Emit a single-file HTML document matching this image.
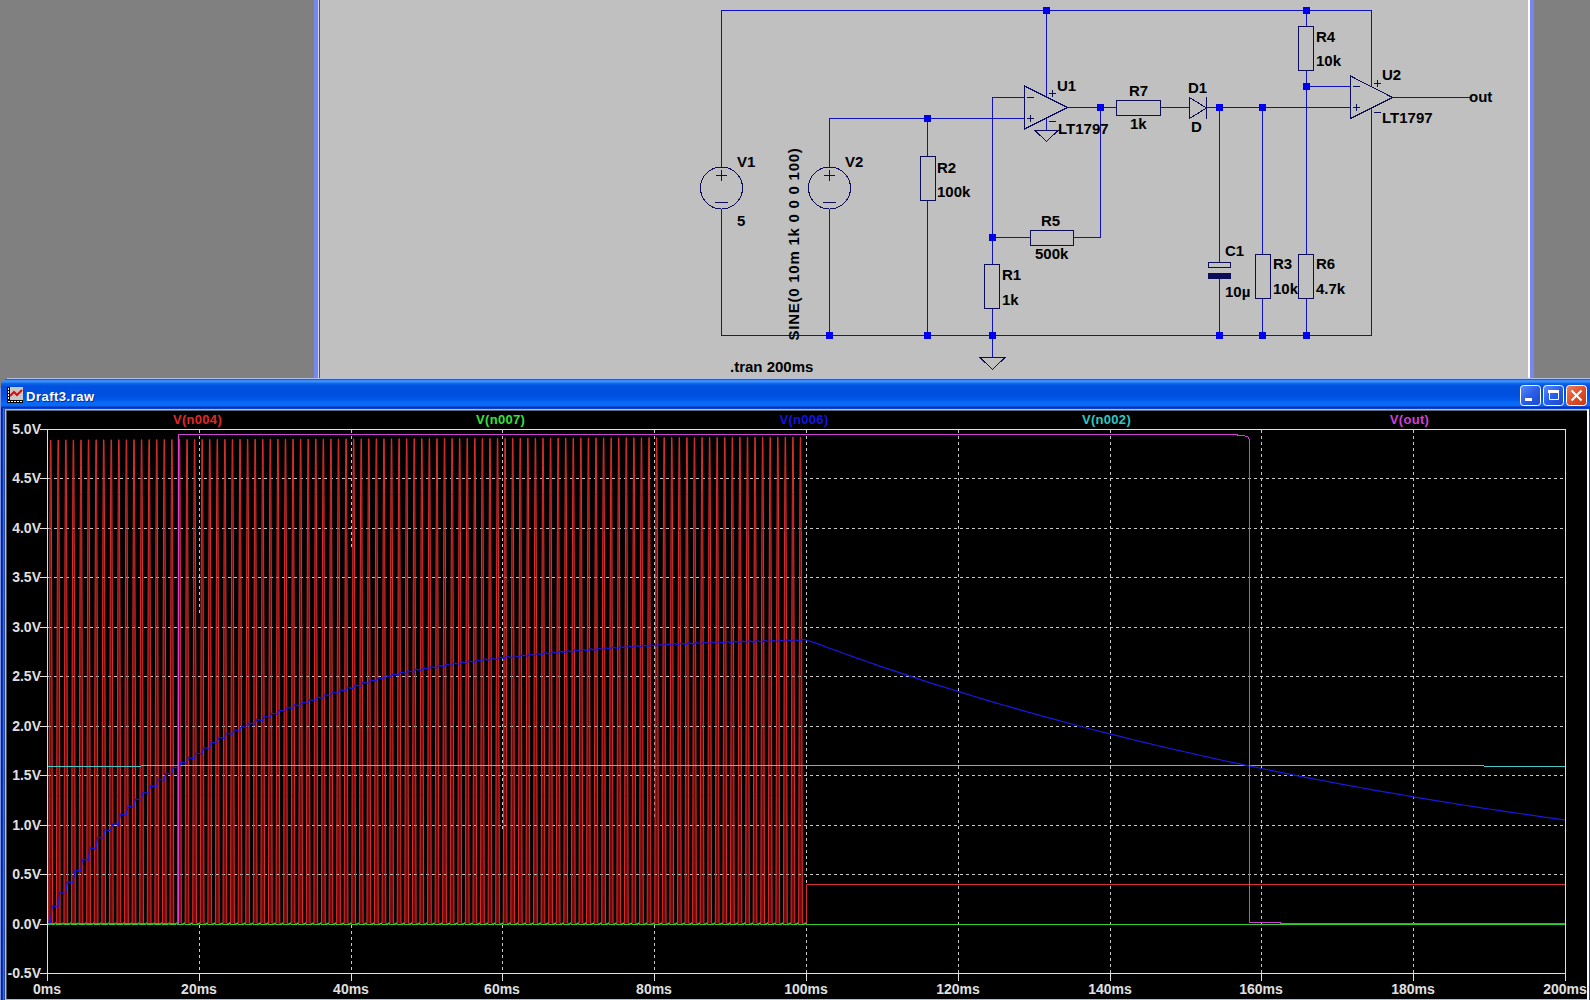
<!DOCTYPE html>
<html><head><meta charset="utf-8"><style>
html,body{margin:0;padding:0;background:#808080;width:1590px;height:1000px;overflow:hidden}
svg{display:block}
</style></head><body>
<svg width="1590" height="1000" viewBox="0 0 1590 1000" shape-rendering="crispEdges">
<defs>
<linearGradient id="bb" x1="0" y1="0" x2="1" y2="1"><stop offset="0" stop-color="#5a8cf8"/><stop offset="0.5" stop-color="#2a5ee8"/><stop offset="1" stop-color="#1a48c8"/></linearGradient>
<linearGradient id="cb" x1="0" y1="0" x2="1" y2="1"><stop offset="0" stop-color="#f08060"/><stop offset="0.5" stop-color="#e05028"/><stop offset="1" stop-color="#c83810"/></linearGradient>
<linearGradient id="tb" x1="0" y1="0" x2="0" y2="1">
<stop offset="0" stop-color="#0a3aa8"/><stop offset="0.04" stop-color="#3a8cf8"/><stop offset="0.1" stop-color="#3a8cf8"/>
<stop offset="0.16" stop-color="#0a64e8"/><stop offset="0.25" stop-color="#0050e0"/><stop offset="0.55" stop-color="#0050e0"/>
<stop offset="0.7" stop-color="#0058e8"/><stop offset="0.8" stop-color="#0868f8"/><stop offset="0.93" stop-color="#0868f8"/><stop offset="0.97" stop-color="#0a30a0"/><stop offset="1" stop-color="#0a30a0"/>
</linearGradient>
</defs>
<rect x="0" y="0" width="1590" height="1000" fill="#808080"/>
<!-- schematic window -->
<rect x="314" y="0" width="4" height="380" fill="#7688ee"/>
<rect x="318" y="0" width="1" height="380" fill="#d0d4f0"/>
<rect x="319" y="0" width="1" height="380" fill="#505050"/>
<rect x="320" y="0" width="1208" height="380" fill="#c0c0c0"/>
<rect x="1528" y="0" width="2" height="380" fill="#ffffff"/>
<rect x="1530" y="0" width="4" height="380" fill="#7688ee"/>
<path d="M721 10.5H1372M721 335.5H1372M829 118.5H1025M992 97.5H1025M992 237.5H1031M1074 237.5H1101M1067 107.5H1117M1160 107.5H1190M1206 107.5H1351M1306 86.5H1351M1392 97.5H1470M721.5 10V168M721.5 209V336M1371.5 10V87M1371.5 108V336M1046.5 10V97M1046.5 118V131M829.5 118V168M829.5 209V336M927.5 118V157M927.5 200V336M992.5 97V265M992.5 308V358M1100.5 107V238M1219.5 107V263M1219.5 279V336M1262.5 107V255M1262.5 298V336M1306.5 10V27M1306.5 70V255M1306.5 298V336" stroke="#1010c0" fill="none"/><rect x="1043" y="7" width="7" height="7" fill="#0000ee"/><rect x="1303" y="7" width="7" height="7" fill="#0000ee"/><rect x="924" y="115" width="7" height="7" fill="#0000ee"/><rect x="1097" y="104" width="7" height="7" fill="#0000ee"/><rect x="1216" y="104" width="7" height="7" fill="#0000ee"/><rect x="1259" y="104" width="7" height="7" fill="#0000ee"/><rect x="1303" y="83" width="7" height="7" fill="#0000ee"/><rect x="989" y="234" width="7" height="7" fill="#0000ee"/><rect x="826" y="332" width="7" height="7" fill="#0000ee"/><rect x="924" y="332" width="7" height="7" fill="#0000ee"/><rect x="989" y="332" width="7" height="7" fill="#0000ee"/><rect x="1216" y="332" width="7" height="7" fill="#0000ee"/><rect x="1259" y="332" width="7" height="7" fill="#0000ee"/><rect x="1303" y="332" width="7" height="7" fill="#0000ee"/><path d="M920.5 156.5H935.5V200.5H920.5Z M984.5 264.5H999.5V308.5H984.5Z M1030.5 230.5H1073.5V245.5H1030.5Z M1116.5 100.5H1160.5V115.5H1116.5Z M1298.5 26.5H1313.5V70.5H1298.5Z M1255.5 254.5H1270.5V298.5H1255.5Z M1298.5 254.5H1313.5V298.5H1298.5Z M1208.5 262.5H1230.5V267.5H1208.5Z M1189.5 97.5V118.5L1206.5 108Z M1206.5 97V119 M1024.5 86L1024.5 129L1067.5 107.5Z M1350.5 76L1350.5 118.5L1392.5 97.5Z M1027 97.5H1034 M1353 86.5H1360 M1027 118.5H1034M1030.5 115V122 M1353 107.5H1360M1356.5 104V111 M1049 93.5H1056M1052.5 90V97 M1374 83.5H1381M1377.5 80V87 M1049 121.5H1056 M1374 112.5H1381 M1035 130.5H1058L1046.5 141.5Z M980 357.5H1005L992.5 369.5Z M716 175.5H727M721.5 170V181M715 202.5H728 M824 175.5H835M829.5 170V181M823 202.5H836" stroke="#0c0c58" fill="none"/><circle cx="721.5" cy="188" r="21" stroke="#0c0c58" fill="none"/><circle cx="829.5" cy="188" r="21" stroke="#0c0c58" fill="none"/><rect x="1208" y="273" width="23" height="6" fill="#0c0c58"/><g font-family="Liberation Sans, sans-serif" font-size="15" font-weight="bold" fill="#000"><text x="737" y="166.8">V1</text><text x="737" y="225.6">5</text><text x="845" y="166.8">V2</text><text x="937" y="172.7">R2</text><text x="937" y="196.7">100k</text><text x="1057" y="91.0">U1</text><text x="1058" y="134.1">LT1797</text><text x="1002" y="280.1">R1</text><text x="1002" y="305.3">1k</text><text x="1041" y="226.1">R5</text><text x="1035" y="259.1">500k</text><text x="1129" y="95.8">R7</text><text x="1130" y="128.8">1k</text><text x="1188" y="92.8">D1</text><text x="1191" y="132.0">D</text><text x="1225" y="256.1">C1</text><text x="1225" y="297.0">10µ</text><text x="1273" y="268.7">R3</text><text x="1273" y="293.8">10k</text><text x="1316" y="268.7">R6</text><text x="1316" y="293.8">4.7k</text><text x="1316" y="41.9">R4</text><text x="1316" y="66.0">10k</text><text x="1382" y="80.1">U2</text><text x="1382" y="123.2">LT1797</text><text x="1469" y="101.7">out</text><text x="730" y="371.9">.tran 200ms</text><text transform="translate(798.5 340.5) rotate(-90)" font-weight="bold" letter-spacing="0.75">SINE(0 10m 1k 0 0 0 100)</text></g>
<!-- plot window -->
<path d="M1 1000V386Q1 379 8 379H1590V1000Z" fill="#0840d8"/>
<path d="M1 408V386Q1 379 8 379H1590V408Z" fill="url(#tb)"/>
<rect x="7" y="378" width="1583" height="1" fill="#b4c0ec"/>
<rect x="0" y="388" width="1" height="612" fill="#8090e0"/>
<rect x="1" y="408" width="1" height="592" fill="#0a2288"/>
<rect x="2" y="408" width="1" height="592" fill="#0436b8"/>
<rect x="3" y="408" width="1" height="592" fill="#3366e8"/>
<rect x="4" y="408" width="1" height="592" fill="#2a48a8"/>
<rect x="5" y="409" width="1585" height="591" fill="#b0bce8"/>
<rect x="6" y="410" width="1581" height="1" fill="#606878"/>
<rect x="6" y="411" width="1" height="588" fill="#505860"/>
<rect x="7" y="411" width="1580" height="588" fill="#000"/>
<rect x="1587" y="409" width="2" height="591" fill="#ffffff"/>
<rect x="1589" y="409" width="1" height="591" fill="#1040c8"/>
<path d="M48.80 923.5L48.96 858.8L49.12 795.3L49.27 733.9L49.43 675.8L49.59 621.9L49.75 573.1L49.90 530.4L50.06 494.4L50.22 465.7L50.38 444.9L50.54 440.0L50.69 440.0L50.85 440.0L51.01 444.9L51.17 465.7L51.32 494.4L51.48 530.4L51.64 573.1L51.80 621.9L51.96 675.8L52.11 733.9L52.27 795.3L52.43 858.8L52.59 923.5ZM56.37 923.5L56.53 858.8L56.69 795.3L56.85 733.9L57.01 675.8L57.16 621.9L57.32 573.1L57.48 530.4L57.64 494.4L57.79 465.7L57.95 444.9L58.11 440.0L58.27 440.0L58.43 440.0L58.58 444.9L58.74 465.7L58.90 494.4L59.06 530.4L59.21 573.1L59.37 621.9L59.53 675.8L59.69 733.9L59.85 795.3L60.00 858.8L60.16 923.5ZM63.95 923.5L64.11 858.8L64.26 795.3L64.42 733.9L64.58 675.8L64.74 621.9L64.89 573.1L65.05 530.4L65.21 494.4L65.37 465.7L65.53 444.9L65.68 439.9L65.84 439.9L66.00 439.9L66.16 444.9L66.31 465.7L66.47 494.4L66.63 530.4L66.79 573.1L66.95 621.9L67.10 675.8L67.26 733.9L67.42 795.3L67.58 858.8L67.73 923.5ZM71.52 923.5L71.68 858.8L71.84 795.3L72.00 733.9L72.15 675.8L72.31 621.9L72.47 573.1L72.63 530.4L72.78 494.4L72.94 465.7L73.10 444.9L73.26 439.9L73.42 439.9L73.57 439.9L73.73 444.9L73.89 465.7L74.05 494.4L74.20 530.4L74.36 573.1L74.52 621.9L74.68 675.8L74.84 733.9L74.99 795.3L75.15 858.8L75.31 923.5ZM79.10 923.5L79.25 858.8L79.41 795.3L79.57 733.9L79.73 675.8L79.88 621.9L80.04 573.1L80.20 530.4L80.36 494.4L80.52 465.7L80.67 444.9L80.83 439.9L80.99 439.9L81.15 439.9L81.31 444.9L81.46 465.7L81.62 494.4L81.78 530.4L81.94 573.1L82.09 621.9L82.25 675.8L82.41 733.9L82.57 795.3L82.73 858.8L82.88 923.5ZM86.67 923.5L86.83 858.8L86.99 795.3L87.14 733.9L87.30 675.8L87.46 621.9L87.62 573.1L87.77 530.4L87.93 494.4L88.09 465.7L88.25 444.9L88.41 439.8L88.56 439.8L88.72 439.8L88.88 444.9L89.04 465.7L89.19 494.4L89.35 530.4L89.51 573.1L89.67 621.9L89.83 675.8L89.98 733.9L90.14 795.3L90.30 858.8L90.46 923.5ZM94.24 923.5L94.40 858.8L94.56 795.3L94.72 733.9L94.88 675.8L95.03 621.9L95.19 573.1L95.35 530.4L95.51 494.4L95.66 465.7L95.82 444.9L95.98 439.8L96.14 439.8L96.30 439.8L96.45 444.9L96.61 465.7L96.77 494.4L96.93 530.4L97.08 573.1L97.24 621.9L97.40 675.8L97.56 733.9L97.72 795.3L97.87 858.8L98.03 923.5ZM101.82 923.5L101.98 858.8L102.13 795.3L102.29 733.9L102.45 675.8L102.61 621.9L102.76 573.1L102.92 530.4L103.08 494.4L103.24 465.7L103.40 444.9L103.55 439.8L103.71 439.8L103.87 439.8L104.03 444.9L104.18 465.7L104.34 494.4L104.50 530.4L104.66 573.1L104.82 621.9L104.97 675.8L105.13 733.9L105.29 795.3L105.45 858.8L105.61 923.5ZM109.39 923.5L109.55 858.8L109.71 795.3L109.87 733.9L110.02 675.8L110.18 621.9L110.34 573.1L110.50 530.4L110.65 494.4L110.81 465.7L110.97 444.9L111.13 439.8L111.29 439.8L111.44 439.8L111.60 444.9L111.76 465.7L111.92 494.4L112.07 530.4L112.23 573.1L112.39 621.9L112.55 675.8L112.71 733.9L112.86 795.3L113.02 858.8L113.18 923.5ZM116.97 923.5L117.12 858.8L117.28 795.3L117.44 733.9L117.60 675.8L117.75 621.9L117.91 573.1L118.07 530.4L118.23 494.4L118.39 465.7L118.54 444.9L118.70 439.7L118.86 439.7L119.02 439.7L119.18 444.9L119.33 465.7L119.49 494.4L119.65 530.4L119.81 573.1L119.96 621.9L120.12 675.8L120.28 733.9L120.44 795.3L120.60 858.8L120.75 923.5ZM124.54 923.5L124.70 858.8L124.86 795.3L125.01 733.9L125.17 675.8L125.33 621.9L125.49 573.1L125.64 530.4L125.80 494.4L125.96 465.7L126.12 444.9L126.28 439.7L126.43 439.7L126.59 439.7L126.75 444.9L126.91 465.7L127.06 494.4L127.22 530.4L127.38 573.1L127.54 621.9L127.70 675.8L127.85 733.9L128.01 795.3L128.17 858.8L128.33 923.5ZM132.11 923.5L132.27 858.8L132.43 795.3L132.59 733.9L132.75 675.8L132.90 621.9L133.06 573.1L133.22 530.4L133.38 494.4L133.53 465.7L133.69 444.9L133.85 439.7L134.01 439.7L134.17 439.7L134.32 444.9L134.48 465.7L134.64 494.4L134.80 530.4L134.95 573.1L135.11 621.9L135.27 675.8L135.43 733.9L135.59 795.3L135.74 858.8L135.90 923.5ZM139.69 923.5L139.85 858.8L140.00 795.3L140.16 733.9L140.32 675.8L140.48 621.9L140.63 573.1L140.79 530.4L140.95 494.4L141.11 465.7L141.27 444.9L141.42 439.6L141.58 439.6L141.74 439.6L141.90 444.9L142.05 465.7L142.21 494.4L142.37 530.4L142.53 573.1L142.69 621.9L142.84 675.8L143.00 733.9L143.16 795.3L143.32 858.8L143.47 923.5ZM147.26 923.5L147.42 858.8L147.58 795.3L147.74 733.9L147.89 675.8L148.05 621.9L148.21 573.1L148.37 530.4L148.52 494.4L148.68 465.7L148.84 444.9L149.00 439.6L149.16 439.6L149.31 439.6L149.47 444.9L149.63 465.7L149.79 494.4L149.94 530.4L150.10 573.1L150.26 621.9L150.42 675.8L150.58 733.9L150.73 795.3L150.89 858.8L151.05 923.5ZM154.84 923.5L154.99 858.8L155.15 795.3L155.31 733.9L155.47 675.8L155.62 621.9L155.78 573.1L155.94 530.4L156.10 494.4L156.26 465.7L156.41 444.9L156.57 439.6L156.73 439.6L156.89 439.6L157.05 444.9L157.20 465.7L157.36 494.4L157.52 530.4L157.68 573.1L157.83 621.9L157.99 675.8L158.15 733.9L158.31 795.3L158.47 858.8L158.62 923.5ZM162.41 923.5L162.57 858.8L162.73 795.3L162.88 733.9L163.04 675.8L163.20 621.9L163.36 573.1L163.51 530.4L163.67 494.4L163.83 465.7L163.99 444.9L164.15 439.5L164.30 439.5L164.46 439.5L164.62 444.9L164.78 465.7L164.93 494.4L165.09 530.4L165.25 573.1L165.41 621.9L165.57 675.8L165.72 733.9L165.88 795.3L166.04 858.8L166.20 923.5ZM169.98 923.5L170.14 858.8L170.30 795.3L170.46 733.9L170.62 675.8L170.77 621.9L170.93 573.1L171.09 530.4L171.25 494.4L171.40 465.7L171.56 444.9L171.72 439.5L171.88 439.5L172.04 439.5L172.19 444.9L172.35 465.7L172.51 494.4L172.67 530.4L172.82 573.1L172.98 621.9L173.14 675.8L173.30 733.9L173.46 795.3L173.61 858.8L173.77 923.5ZM177.56 923.5L177.72 858.8L177.87 795.3L178.03 733.9L178.19 675.8L178.35 621.9L178.50 573.1L178.66 530.4L178.82 494.4L178.98 465.7L179.14 444.9L179.29 439.5L179.45 439.5L179.61 439.5L179.77 444.9L179.92 465.7L180.08 494.4L180.24 530.4L180.40 573.1L180.56 621.9L180.71 675.8L180.87 733.9L181.03 795.3L181.19 858.8L181.34 923.5ZM185.13 923.5L185.29 858.8L185.45 795.3L185.61 733.9L185.76 675.8L185.92 621.9L186.08 573.1L186.24 530.4L186.39 494.4L186.55 465.7L186.71 444.9L186.87 439.5L187.03 439.5L187.18 439.5L187.34 444.9L187.50 465.7L187.66 494.4L187.81 530.4L187.97 573.1L188.13 621.9L188.29 675.8L188.45 733.9L188.60 795.3L188.76 858.8L188.92 923.5ZM192.71 923.5L192.86 858.8L193.02 795.3L193.18 733.9L193.34 675.8L193.49 621.9L193.65 573.1L193.81 530.4L193.97 494.4L194.13 465.7L194.28 444.9L194.44 439.4L194.60 439.4L194.76 439.4L194.92 444.9L195.07 465.7L195.23 494.4L195.39 530.4L195.55 573.1L195.70 621.9L195.86 675.8L196.02 733.9L196.18 795.3L196.34 858.8L196.49 923.5ZM200.28 923.5L200.44 858.8L200.60 795.3L200.75 733.9L200.91 675.8L201.07 621.9L201.23 573.1L201.38 530.4L201.54 494.4L201.70 465.7L201.86 444.9L202.02 439.4L202.17 439.4L202.33 439.4L202.49 444.9L202.65 465.7L202.80 494.4L202.96 530.4L203.12 573.1L203.28 621.9L203.44 675.8L203.59 733.9L203.75 795.3L203.91 858.8L204.07 923.5ZM207.85 923.5L208.01 858.8L208.17 795.3L208.33 733.9L208.49 675.8L208.64 621.9L208.80 573.1L208.96 530.4L209.12 494.4L209.27 465.7L209.43 444.9L209.59 439.4L209.75 439.4L209.91 439.4L210.06 444.9L210.22 465.7L210.38 494.4L210.54 530.4L210.69 573.1L210.85 621.9L211.01 675.8L211.17 733.9L211.33 795.3L211.48 858.8L211.64 923.5ZM215.43 923.5L215.59 858.8L215.74 795.3L215.90 733.9L216.06 675.8L216.22 621.9L216.37 573.1L216.53 530.4L216.69 494.4L216.85 465.7L217.01 444.9L217.16 439.3L217.32 439.3L217.48 439.3L217.64 444.9L217.79 465.7L217.95 494.4L218.11 530.4L218.27 573.1L218.43 621.9L218.58 675.8L218.74 733.9L218.90 795.3L219.06 858.8L219.22 923.5ZM223.00 923.5L223.16 858.8L223.32 795.3L223.48 733.9L223.63 675.8L223.79 621.9L223.95 573.1L224.11 530.4L224.26 494.4L224.42 465.7L224.58 444.9L224.74 439.3L224.90 439.3L225.05 439.3L225.21 444.9L225.37 465.7L225.53 494.4L225.68 530.4L225.84 573.1L226.00 621.9L226.16 675.8L226.32 733.9L226.47 795.3L226.63 858.8L226.79 923.5ZM230.58 923.5L230.73 858.8L230.89 795.3L231.05 733.9L231.21 675.8L231.36 621.9L231.52 573.1L231.68 530.4L231.84 494.4L232.00 465.7L232.15 444.9L232.31 439.3L232.47 439.3L232.63 439.3L232.79 444.9L232.94 465.7L233.10 494.4L233.26 530.4L233.42 573.1L233.57 621.9L233.73 675.8L233.89 733.9L234.05 795.3L234.21 858.8L234.36 923.5ZM238.15 923.5L238.31 858.8L238.47 795.3L238.62 733.9L238.78 675.8L238.94 621.9L239.10 573.1L239.25 530.4L239.41 494.4L239.57 465.7L239.73 444.9L239.89 439.2L240.04 439.2L240.20 439.2L240.36 444.9L240.52 465.7L240.67 494.4L240.83 530.4L240.99 573.1L241.15 621.9L241.31 675.8L241.46 733.9L241.62 795.3L241.78 858.8L241.94 923.5ZM245.72 923.5L245.88 858.8L246.04 795.3L246.20 733.9L246.36 675.8L246.51 621.9L246.67 573.1L246.83 530.4L246.99 494.4L247.14 465.7L247.30 444.9L247.46 439.2L247.62 439.2L247.78 439.2L247.93 444.9L248.09 465.7L248.25 494.4L248.41 530.4L248.56 573.1L248.72 621.9L248.88 675.8L249.04 733.9L249.20 795.3L249.35 858.8L249.51 923.5ZM253.30 923.5L253.46 858.8L253.61 795.3L253.77 733.9L253.93 675.8L254.09 621.9L254.24 573.1L254.40 530.4L254.56 494.4L254.72 465.7L254.88 444.9L255.03 439.2L255.19 439.2L255.35 439.2L255.51 444.9L255.66 465.7L255.82 494.4L255.98 530.4L256.14 573.1L256.30 621.9L256.45 675.8L256.61 733.9L256.77 795.3L256.93 858.8L257.08 923.5ZM260.87 923.5L261.03 858.8L261.19 795.3L261.35 733.9L261.50 675.8L261.66 621.9L261.82 573.1L261.98 530.4L262.13 494.4L262.29 465.7L262.45 444.9L262.61 439.2L262.77 439.2L262.92 439.2L263.08 444.9L263.24 465.7L263.40 494.4L263.55 530.4L263.71 573.1L263.87 621.9L264.03 675.8L264.19 733.9L264.34 795.3L264.50 858.8L264.66 923.5ZM268.45 923.5L268.60 858.8L268.76 795.3L268.92 733.9L269.08 675.8L269.23 621.9L269.39 573.1L269.55 530.4L269.71 494.4L269.87 465.7L270.02 444.9L270.18 439.1L270.34 439.1L270.50 439.1L270.66 444.9L270.81 465.7L270.97 494.4L271.13 530.4L271.29 573.1L271.44 621.9L271.60 675.8L271.76 733.9L271.92 795.3L272.08 858.8L272.23 923.5ZM276.02 923.5L276.18 858.8L276.34 795.3L276.49 733.9L276.65 675.8L276.81 621.9L276.97 573.1L277.12 530.4L277.28 494.4L277.44 465.7L277.60 444.9L277.76 439.1L277.91 439.1L278.07 439.1L278.23 444.9L278.39 465.7L278.54 494.4L278.70 530.4L278.86 573.1L279.02 621.9L279.18 675.8L279.33 733.9L279.49 795.3L279.65 858.8L279.81 923.5ZM283.59 923.5L283.75 858.8L283.91 795.3L284.07 733.9L284.23 675.8L284.38 621.9L284.54 573.1L284.70 530.4L284.86 494.4L285.01 465.7L285.17 444.9L285.33 439.1L285.49 439.1L285.65 439.1L285.80 444.9L285.96 465.7L286.12 494.4L286.28 530.4L286.43 573.1L286.59 621.9L286.75 675.8L286.91 733.9L287.07 795.3L287.22 858.8L287.38 923.5ZM291.17 923.5L291.33 858.8L291.48 795.3L291.64 733.9L291.80 675.8L291.96 621.9L292.11 573.1L292.27 530.4L292.43 494.4L292.59 465.7L292.75 444.9L292.90 439.0L293.06 439.0L293.22 439.0L293.38 444.9L293.53 465.7L293.69 494.4L293.85 530.4L294.01 573.1L294.17 621.9L294.32 675.8L294.48 733.9L294.64 795.3L294.80 858.8L294.95 923.5ZM298.74 923.5L298.90 858.8L299.06 795.3L299.22 733.9L299.37 675.8L299.53 621.9L299.69 573.1L299.85 530.4L300.00 494.4L300.16 465.7L300.32 444.9L300.48 439.0L300.64 439.0L300.79 439.0L300.95 444.9L301.11 465.7L301.27 494.4L301.42 530.4L301.58 573.1L301.74 621.9L301.90 675.8L302.06 733.9L302.21 795.3L302.37 858.8L302.53 923.5ZM306.32 923.5L306.47 858.8L306.63 795.3L306.79 733.9L306.95 675.8L307.10 621.9L307.26 573.1L307.42 530.4L307.58 494.4L307.74 465.7L307.89 444.9L308.05 439.0L308.21 439.0L308.37 439.0L308.53 444.9L308.68 465.7L308.84 494.4L309.00 530.4L309.16 573.1L309.31 621.9L309.47 675.8L309.63 733.9L309.79 795.3L309.95 858.8L310.10 923.5ZM313.89 923.5L314.05 858.8L314.21 795.3L314.36 733.9L314.52 675.8L314.68 621.9L314.84 573.1L314.99 530.4L315.15 494.4L315.31 465.7L315.47 444.9L315.63 438.9L315.78 438.9L315.94 438.9L316.10 444.9L316.26 465.7L316.41 494.4L316.57 530.4L316.73 573.1L316.89 621.9L317.05 675.8L317.20 733.9L317.36 795.3L317.52 858.8L317.68 923.5ZM321.46 923.5L321.62 858.8L321.78 795.3L321.94 733.9L322.10 675.8L322.25 621.9L322.41 573.1L322.57 530.4L322.73 494.4L322.88 465.7L323.04 444.9L323.20 438.9L323.36 438.9L323.52 438.9L323.67 444.9L323.83 465.7L323.99 494.4L324.15 530.4L324.30 573.1L324.46 621.9L324.62 675.8L324.78 733.9L324.94 795.3L325.09 858.8L325.25 923.5ZM329.04 923.5L329.20 858.8L329.35 795.3L329.51 733.9L329.67 675.8L329.83 621.9L329.98 573.1L330.14 530.4L330.30 494.4L330.46 465.7L330.62 444.9L330.77 438.9L330.93 438.9L331.09 438.9L331.25 444.9L331.40 465.7L331.56 494.4L331.72 530.4L331.88 573.1L332.04 621.9L332.19 675.8L332.35 733.9L332.51 795.3L332.67 858.8L332.82 923.5ZM336.61 923.5L336.77 858.8L336.93 795.3L337.09 733.9L337.24 675.8L337.40 621.9L337.56 573.1L337.72 530.4L337.87 494.4L338.03 465.7L338.19 444.9L338.35 438.9L338.51 438.9L338.66 438.9L338.82 444.9L338.98 465.7L339.14 494.4L339.29 530.4L339.45 573.1L339.61 621.9L339.77 675.8L339.93 733.9L340.08 795.3L340.24 858.8L340.40 923.5ZM344.19 923.5L344.34 858.8L344.50 795.3L344.66 733.9L344.82 675.8L344.97 621.9L345.13 573.1L345.29 530.4L345.45 494.4L345.61 465.7L345.76 444.9L345.92 438.8L346.08 438.8L346.24 438.8L346.40 444.9L346.55 465.7L346.71 494.4L346.87 530.4L347.03 573.1L347.18 621.9L347.34 675.8L347.50 733.9L347.66 795.3L347.82 858.8L347.97 923.5ZM351.76 923.5L351.92 858.8L352.08 795.3L352.23 733.9L352.39 675.8L352.55 621.9L352.71 573.1L352.86 530.4L353.02 494.4L353.18 465.7L353.34 444.9L353.50 438.8L353.65 438.8L353.81 438.8L353.97 444.9L354.13 465.7L354.28 494.4L354.44 530.4L354.60 573.1L354.76 621.9L354.92 675.8L355.07 733.9L355.23 795.3L355.39 858.8L355.55 923.5ZM359.33 923.5L359.49 858.8L359.65 795.3L359.81 733.9L359.97 675.8L360.12 621.9L360.28 573.1L360.44 530.4L360.60 494.4L360.75 465.7L360.91 444.9L361.07 438.8L361.23 438.8L361.39 438.8L361.54 444.9L361.70 465.7L361.86 494.4L362.02 530.4L362.17 573.1L362.33 621.9L362.49 675.8L362.65 733.9L362.81 795.3L362.96 858.8L363.12 923.5ZM366.91 923.5L367.07 858.8L367.22 795.3L367.38 733.9L367.54 675.8L367.70 621.9L367.85 573.1L368.01 530.4L368.17 494.4L368.33 465.7L368.49 444.9L368.64 438.7L368.80 438.7L368.96 438.7L369.12 444.9L369.27 465.7L369.43 494.4L369.59 530.4L369.75 573.1L369.91 621.9L370.06 675.8L370.22 733.9L370.38 795.3L370.54 858.8L370.69 923.5ZM374.48 923.5L374.64 858.8L374.80 795.3L374.96 733.9L375.11 675.8L375.27 621.9L375.43 573.1L375.59 530.4L375.74 494.4L375.90 465.7L376.06 444.9L376.22 438.7L376.38 438.7L376.53 438.7L376.69 444.9L376.85 465.7L377.01 494.4L377.16 530.4L377.32 573.1L377.48 621.9L377.64 675.8L377.80 733.9L377.95 795.3L378.11 858.8L378.27 923.5ZM382.06 923.5L382.21 858.8L382.37 795.3L382.53 733.9L382.69 675.8L382.84 621.9L383.00 573.1L383.16 530.4L383.32 494.4L383.48 465.7L383.63 444.9L383.79 438.7L383.95 438.7L384.11 438.7L384.27 444.9L384.42 465.7L384.58 494.4L384.74 530.4L384.90 573.1L385.05 621.9L385.21 675.8L385.37 733.9L385.53 795.3L385.69 858.8L385.84 923.5ZM389.63 923.5L389.79 858.8L389.95 795.3L390.10 733.9L390.26 675.8L390.42 621.9L390.58 573.1L390.73 530.4L390.89 494.4L391.05 465.7L391.21 444.9L391.37 438.6L391.52 438.6L391.68 438.6L391.84 444.9L392.00 465.7L392.15 494.4L392.31 530.4L392.47 573.1L392.63 621.9L392.79 675.8L392.94 733.9L393.10 795.3L393.26 858.8L393.42 923.5ZM397.20 923.5L397.36 858.8L397.52 795.3L397.68 733.9L397.84 675.8L397.99 621.9L398.15 573.1L398.31 530.4L398.47 494.4L398.62 465.7L398.78 444.9L398.94 438.6L399.10 438.6L399.26 438.6L399.41 444.9L399.57 465.7L399.73 494.4L399.89 530.4L400.04 573.1L400.20 621.9L400.36 675.8L400.52 733.9L400.68 795.3L400.83 858.8L400.99 923.5ZM404.78 923.5L404.94 858.8L405.09 795.3L405.25 733.9L405.41 675.8L405.57 621.9L405.72 573.1L405.88 530.4L406.04 494.4L406.20 465.7L406.36 444.9L406.51 438.6L406.67 438.6L406.83 438.6L406.99 444.9L407.14 465.7L407.30 494.4L407.46 530.4L407.62 573.1L407.78 621.9L407.93 675.8L408.09 733.9L408.25 795.3L408.41 858.8L408.56 923.5ZM412.35 923.5L412.51 858.8L412.67 795.3L412.83 733.9L412.98 675.8L413.14 621.9L413.30 573.1L413.46 530.4L413.61 494.4L413.77 465.7L413.93 444.9L414.09 438.6L414.25 438.6L414.40 438.6L414.56 444.9L414.72 465.7L414.88 494.4L415.03 530.4L415.19 573.1L415.35 621.9L415.51 675.8L415.67 733.9L415.82 795.3L415.98 858.8L416.14 923.5ZM419.93 923.5L420.08 858.8L420.24 795.3L420.40 733.9L420.56 675.8L420.71 621.9L420.87 573.1L421.03 530.4L421.19 494.4L421.35 465.7L421.50 444.9L421.66 438.5L421.82 438.5L421.98 438.5L422.14 444.9L422.29 465.7L422.45 494.4L422.61 530.4L422.77 573.1L422.92 621.9L423.08 675.8L423.24 733.9L423.40 795.3L423.56 858.8L423.71 923.5ZM427.50 923.5L427.66 858.8L427.82 795.3L427.97 733.9L428.13 675.8L428.29 621.9L428.45 573.1L428.60 530.4L428.76 494.4L428.92 465.7L429.08 444.9L429.24 438.5L429.39 438.5L429.55 438.5L429.71 444.9L429.87 465.7L430.02 494.4L430.18 530.4L430.34 573.1L430.50 621.9L430.66 675.8L430.81 733.9L430.97 795.3L431.13 858.8L431.29 923.5ZM435.07 923.5L435.23 858.8L435.39 795.3L435.55 733.9L435.71 675.8L435.86 621.9L436.02 573.1L436.18 530.4L436.34 494.4L436.49 465.7L436.65 444.9L436.81 438.5L436.97 438.5L437.13 438.5L437.28 444.9L437.44 465.7L437.60 494.4L437.76 530.4L437.91 573.1L438.07 621.9L438.23 675.8L438.39 733.9L438.55 795.3L438.70 858.8L438.86 923.5ZM442.65 923.5L442.81 858.8L442.96 795.3L443.12 733.9L443.28 675.8L443.44 621.9L443.59 573.1L443.75 530.4L443.91 494.4L444.07 465.7L444.23 444.9L444.38 438.4L444.54 438.4L444.70 438.4L444.86 444.9L445.01 465.7L445.17 494.4L445.33 530.4L445.49 573.1L445.65 621.9L445.80 675.8L445.96 733.9L446.12 795.3L446.28 858.8L446.44 923.5ZM450.22 923.5L450.38 858.8L450.54 795.3L450.70 733.9L450.85 675.8L451.01 621.9L451.17 573.1L451.33 530.4L451.48 494.4L451.64 465.7L451.80 444.9L451.96 438.4L452.12 438.4L452.27 438.4L452.43 444.9L452.59 465.7L452.75 494.4L452.90 530.4L453.06 573.1L453.22 621.9L453.38 675.8L453.54 733.9L453.69 795.3L453.85 858.8L454.01 923.5ZM457.80 923.5L457.95 858.8L458.11 795.3L458.27 733.9L458.43 675.8L458.58 621.9L458.74 573.1L458.90 530.4L459.06 494.4L459.22 465.7L459.37 444.9L459.53 438.4L459.69 438.4L459.85 438.4L460.01 444.9L460.16 465.7L460.32 494.4L460.48 530.4L460.64 573.1L460.79 621.9L460.95 675.8L461.11 733.9L461.27 795.3L461.43 858.8L461.58 923.5ZM465.37 923.5L465.53 858.8L465.69 795.3L465.84 733.9L466.00 675.8L466.16 621.9L466.32 573.1L466.47 530.4L466.63 494.4L466.79 465.7L466.95 444.9L467.11 438.3L467.26 438.3L467.42 438.3L467.58 444.9L467.74 465.7L467.89 494.4L468.05 530.4L468.21 573.1L468.37 621.9L468.53 675.8L468.68 733.9L468.84 795.3L469.00 858.8L469.16 923.5ZM472.94 923.5L473.10 858.8L473.26 795.3L473.42 733.9L473.58 675.8L473.73 621.9L473.89 573.1L474.05 530.4L474.21 494.4L474.36 465.7L474.52 444.9L474.68 438.3L474.84 438.3L475.00 438.3L475.15 444.9L475.31 465.7L475.47 494.4L475.63 530.4L475.78 573.1L475.94 621.9L476.10 675.8L476.26 733.9L476.42 795.3L476.57 858.8L476.73 923.5ZM480.52 923.5L480.68 858.8L480.83 795.3L480.99 733.9L481.15 675.8L481.31 621.9L481.46 573.1L481.62 530.4L481.78 494.4L481.94 465.7L482.10 444.9L482.25 438.3L482.41 438.3L482.57 438.3L482.73 444.9L482.88 465.7L483.04 494.4L483.20 530.4L483.36 573.1L483.52 621.9L483.67 675.8L483.83 733.9L483.99 795.3L484.15 858.8L484.31 923.5ZM488.09 923.5L488.25 858.8L488.41 795.3L488.57 733.9L488.72 675.8L488.88 621.9L489.04 573.1L489.20 530.4L489.35 494.4L489.51 465.7L489.67 444.9L489.83 438.3L489.99 438.3L490.14 438.3L490.30 444.9L490.46 465.7L490.62 494.4L490.77 530.4L490.93 573.1L491.09 621.9L491.25 675.8L491.41 733.9L491.56 795.3L491.72 858.8L491.88 923.5ZM495.67 923.5L495.82 858.8L495.98 795.3L496.14 733.9L496.30 675.8L496.45 621.9L496.61 573.1L496.77 530.4L496.93 494.4L497.09 465.7L497.24 444.9L497.40 438.2L497.56 438.2L497.72 438.2L497.88 444.9L498.03 465.7L498.19 494.4L498.35 530.4L498.51 573.1L498.66 621.9L498.82 675.8L498.98 733.9L499.14 795.3L499.30 858.8L499.45 923.5ZM503.24 923.5L503.40 858.8L503.56 795.3L503.71 733.9L503.87 675.8L504.03 621.9L504.19 573.1L504.34 530.4L504.50 494.4L504.66 465.7L504.82 444.9L504.98 438.2L505.13 438.2L505.29 438.2L505.45 444.9L505.61 465.7L505.76 494.4L505.92 530.4L506.08 573.1L506.24 621.9L506.40 675.8L506.55 733.9L506.71 795.3L506.87 858.8L507.03 923.5ZM510.81 923.5L510.97 858.8L511.13 795.3L511.29 733.9L511.45 675.8L511.60 621.9L511.76 573.1L511.92 530.4L512.08 494.4L512.23 465.7L512.39 444.9L512.55 438.2L512.71 438.2L512.87 438.2L513.02 444.9L513.18 465.7L513.34 494.4L513.50 530.4L513.65 573.1L513.81 621.9L513.97 675.8L514.13 733.9L514.29 795.3L514.44 858.8L514.60 923.5ZM518.39 923.5L518.55 858.8L518.70 795.3L518.86 733.9L519.02 675.8L519.18 621.9L519.33 573.1L519.49 530.4L519.65 494.4L519.81 465.7L519.97 444.9L520.12 438.1L520.28 438.1L520.44 438.1L520.60 444.9L520.75 465.7L520.91 494.4L521.07 530.4L521.23 573.1L521.39 621.9L521.54 675.8L521.70 733.9L521.86 795.3L522.02 858.8L522.17 923.5ZM525.96 923.5L526.12 858.8L526.28 795.3L526.44 733.9L526.59 675.8L526.75 621.9L526.91 573.1L527.07 530.4L527.22 494.4L527.38 465.7L527.54 444.9L527.70 438.1L527.86 438.1L528.01 438.1L528.17 444.9L528.33 465.7L528.49 494.4L528.64 530.4L528.80 573.1L528.96 621.9L529.12 675.8L529.28 733.9L529.43 795.3L529.59 858.8L529.75 923.5ZM533.54 923.5L533.69 858.8L533.85 795.3L534.01 733.9L534.17 675.8L534.32 621.9L534.48 573.1L534.64 530.4L534.80 494.4L534.96 465.7L535.11 444.9L535.27 438.1L535.43 438.1L535.59 438.1L535.75 444.9L535.90 465.7L536.06 494.4L536.22 530.4L536.38 573.1L536.53 621.9L536.69 675.8L536.85 733.9L537.01 795.3L537.17 858.8L537.32 923.5ZM541.11 923.5L541.27 858.8L541.43 795.3L541.58 733.9L541.74 675.8L541.90 621.9L542.06 573.1L542.21 530.4L542.37 494.4L542.53 465.7L542.69 444.9L542.85 438.0L543.00 438.0L543.16 438.0L543.32 444.9L543.48 465.7L543.63 494.4L543.79 530.4L543.95 573.1L544.11 621.9L544.27 675.8L544.42 733.9L544.58 795.3L544.74 858.8L544.90 923.5ZM548.68 923.5L548.84 858.8L549.00 795.3L549.16 733.9L549.32 675.8L549.47 621.9L549.63 573.1L549.79 530.4L549.95 494.4L550.10 465.7L550.26 444.9L550.42 438.0L550.58 438.0L550.74 438.0L550.89 444.9L551.05 465.7L551.21 494.4L551.37 530.4L551.52 573.1L551.68 621.9L551.84 675.8L552.00 733.9L552.16 795.3L552.31 858.8L552.47 923.5ZM556.26 923.5L556.42 858.8L556.57 795.3L556.73 733.9L556.89 675.8L557.05 621.9L557.20 573.1L557.36 530.4L557.52 494.4L557.68 465.7L557.84 444.9L557.99 438.0L558.15 438.0L558.31 438.0L558.47 444.9L558.62 465.7L558.78 494.4L558.94 530.4L559.10 573.1L559.26 621.9L559.41 675.8L559.57 733.9L559.73 795.3L559.89 858.8L560.04 923.5ZM563.83 923.5L563.99 858.8L564.15 795.3L564.31 733.9L564.46 675.8L564.62 621.9L564.78 573.1L564.94 530.4L565.09 494.4L565.25 465.7L565.41 444.9L565.57 438.0L565.73 438.0L565.88 438.0L566.04 444.9L566.20 465.7L566.36 494.4L566.51 530.4L566.67 573.1L566.83 621.9L566.99 675.8L567.15 733.9L567.30 795.3L567.46 858.8L567.62 923.5ZM571.41 923.5L571.56 858.8L571.72 795.3L571.88 733.9L572.04 675.8L572.19 621.9L572.35 573.1L572.51 530.4L572.67 494.4L572.83 465.7L572.98 444.9L573.14 437.9L573.30 437.9L573.46 437.9L573.62 444.9L573.77 465.7L573.93 494.4L574.09 530.4L574.25 573.1L574.40 621.9L574.56 675.8L574.72 733.9L574.88 795.3L575.04 858.8L575.19 923.5ZM578.98 923.5L579.14 858.8L579.30 795.3L579.45 733.9L579.61 675.8L579.77 621.9L579.93 573.1L580.08 530.4L580.24 494.4L580.40 465.7L580.56 444.9L580.72 437.9L580.87 437.9L581.03 437.9L581.19 444.9L581.35 465.7L581.50 494.4L581.66 530.4L581.82 573.1L581.98 621.9L582.14 675.8L582.29 733.9L582.45 795.3L582.61 858.8L582.77 923.5ZM586.55 923.5L586.71 858.8L586.87 795.3L587.03 733.9L587.19 675.8L587.34 621.9L587.50 573.1L587.66 530.4L587.82 494.4L587.97 465.7L588.13 444.9L588.29 437.9L588.45 437.9L588.61 437.9L588.76 444.9L588.92 465.7L589.08 494.4L589.24 530.4L589.39 573.1L589.55 621.9L589.71 675.8L589.87 733.9L590.03 795.3L590.18 858.8L590.34 923.5ZM594.13 923.5L594.29 858.8L594.44 795.3L594.60 733.9L594.76 675.8L594.92 621.9L595.07 573.1L595.23 530.4L595.39 494.4L595.55 465.7L595.71 444.9L595.86 437.8L596.02 437.8L596.18 437.8L596.34 444.9L596.49 465.7L596.65 494.4L596.81 530.4L596.97 573.1L597.13 621.9L597.28 675.8L597.44 733.9L597.60 795.3L597.76 858.8L597.91 923.5ZM601.70 923.5L601.86 858.8L602.02 795.3L602.18 733.9L602.33 675.8L602.49 621.9L602.65 573.1L602.81 530.4L602.96 494.4L603.12 465.7L603.28 444.9L603.44 437.8L603.60 437.8L603.75 437.8L603.91 444.9L604.07 465.7L604.23 494.4L604.38 530.4L604.54 573.1L604.70 621.9L604.86 675.8L605.02 733.9L605.17 795.3L605.33 858.8L605.49 923.5ZM609.28 923.5L609.43 858.8L609.59 795.3L609.75 733.9L609.91 675.8L610.06 621.9L610.22 573.1L610.38 530.4L610.54 494.4L610.70 465.7L610.85 444.9L611.01 437.8L611.17 437.8L611.33 437.8L611.49 444.9L611.64 465.7L611.80 494.4L611.96 530.4L612.12 573.1L612.27 621.9L612.43 675.8L612.59 733.9L612.75 795.3L612.91 858.8L613.06 923.5ZM616.85 923.5L617.01 858.8L617.17 795.3L617.32 733.9L617.48 675.8L617.64 621.9L617.80 573.1L617.95 530.4L618.11 494.4L618.27 465.7L618.43 444.9L618.59 437.8L618.74 437.8L618.90 437.8L619.06 444.9L619.22 465.7L619.37 494.4L619.53 530.4L619.69 573.1L619.85 621.9L620.01 675.8L620.16 733.9L620.32 795.3L620.48 858.8L620.64 923.5ZM624.42 923.5L624.58 858.8L624.74 795.3L624.90 733.9L625.06 675.8L625.21 621.9L625.37 573.1L625.53 530.4L625.69 494.4L625.84 465.7L626.00 444.9L626.16 437.7L626.32 437.7L626.48 437.7L626.63 444.9L626.79 465.7L626.95 494.4L627.11 530.4L627.26 573.1L627.42 621.9L627.58 675.8L627.74 733.9L627.90 795.3L628.05 858.8L628.21 923.5ZM632.00 923.5L632.16 858.8L632.31 795.3L632.47 733.9L632.63 675.8L632.79 621.9L632.94 573.1L633.10 530.4L633.26 494.4L633.42 465.7L633.58 444.9L633.73 437.7L633.89 437.7L634.05 437.7L634.21 444.9L634.36 465.7L634.52 494.4L634.68 530.4L634.84 573.1L635.00 621.9L635.15 675.8L635.31 733.9L635.47 795.3L635.63 858.8L635.78 923.5ZM639.57 923.5L639.73 858.8L639.89 795.3L640.05 733.9L640.20 675.8L640.36 621.9L640.52 573.1L640.68 530.4L640.83 494.4L640.99 465.7L641.15 444.9L641.31 437.7L641.47 437.7L641.62 437.7L641.78 444.9L641.94 465.7L642.10 494.4L642.25 530.4L642.41 573.1L642.57 621.9L642.73 675.8L642.89 733.9L643.04 795.3L643.20 858.8L643.36 923.5ZM647.15 923.5L647.30 858.8L647.46 795.3L647.62 733.9L647.78 675.8L647.93 621.9L648.09 573.1L648.25 530.4L648.41 494.4L648.57 465.7L648.72 444.9L648.88 437.6L649.04 437.6L649.20 437.6L649.36 444.9L649.51 465.7L649.67 494.4L649.83 530.4L649.99 573.1L650.14 621.9L650.30 675.8L650.46 733.9L650.62 795.3L650.78 858.8L650.93 923.5ZM654.72 923.5L654.88 858.8L655.04 795.3L655.19 733.9L655.35 675.8L655.51 621.9L655.67 573.1L655.82 530.4L655.98 494.4L656.14 465.7L656.30 444.9L656.46 437.6L656.61 437.6L656.77 437.6L656.93 444.9L657.09 465.7L657.24 494.4L657.40 530.4L657.56 573.1L657.72 621.9L657.88 675.8L658.03 733.9L658.19 795.3L658.35 858.8L658.51 923.5ZM662.29 923.5L662.45 858.8L662.61 795.3L662.77 733.9L662.93 675.8L663.08 621.9L663.24 573.1L663.40 530.4L663.56 494.4L663.71 465.7L663.87 444.9L664.03 437.6L664.19 437.6L664.35 437.6L664.50 444.9L664.66 465.7L664.82 494.4L664.98 530.4L665.13 573.1L665.29 621.9L665.45 675.8L665.61 733.9L665.77 795.3L665.92 858.8L666.08 923.5ZM669.87 923.5L670.03 858.8L670.18 795.3L670.34 733.9L670.50 675.8L670.66 621.9L670.81 573.1L670.97 530.4L671.13 494.4L671.29 465.7L671.45 444.9L671.60 437.5L671.76 437.5L671.92 437.5L672.08 444.9L672.23 465.7L672.39 494.4L672.55 530.4L672.71 573.1L672.87 621.9L673.02 675.8L673.18 733.9L673.34 795.3L673.50 858.8L673.65 923.5ZM677.44 923.5L677.60 858.8L677.76 795.3L677.92 733.9L678.07 675.8L678.23 621.9L678.39 573.1L678.55 530.4L678.70 494.4L678.86 465.7L679.02 444.9L679.18 437.5L679.34 437.5L679.49 437.5L679.65 444.9L679.81 465.7L679.97 494.4L680.12 530.4L680.28 573.1L680.44 621.9L680.60 675.8L680.76 733.9L680.91 795.3L681.07 858.8L681.23 923.5ZM685.02 923.5L685.17 858.8L685.33 795.3L685.49 733.9L685.65 675.8L685.80 621.9L685.96 573.1L686.12 530.4L686.28 494.4L686.44 465.7L686.59 444.9L686.75 437.5L686.91 437.5L687.07 437.5L687.23 444.9L687.38 465.7L687.54 494.4L687.70 530.4L687.86 573.1L688.01 621.9L688.17 675.8L688.33 733.9L688.49 795.3L688.65 858.8L688.80 923.5ZM692.59 923.5L692.75 858.8L692.91 795.3L693.06 733.9L693.22 675.8L693.38 621.9L693.54 573.1L693.69 530.4L693.85 494.4L694.01 465.7L694.17 444.9L694.33 437.5L694.48 437.5L694.64 437.5L694.80 444.9L694.96 465.7L695.11 494.4L695.27 530.4L695.43 573.1L695.59 621.9L695.75 675.8L695.90 733.9L696.06 795.3L696.22 858.8L696.38 923.5ZM700.16 923.5L700.32 858.8L700.48 795.3L700.64 733.9L700.80 675.8L700.95 621.9L701.11 573.1L701.27 530.4L701.43 494.4L701.58 465.7L701.74 444.9L701.90 437.4L702.06 437.4L702.22 437.4L702.37 444.9L702.53 465.7L702.69 494.4L702.85 530.4L703.00 573.1L703.16 621.9L703.32 675.8L703.48 733.9L703.64 795.3L703.79 858.8L703.95 923.5ZM707.74 923.5L707.90 858.8L708.05 795.3L708.21 733.9L708.37 675.8L708.53 621.9L708.68 573.1L708.84 530.4L709.00 494.4L709.16 465.7L709.32 444.9L709.47 437.4L709.63 437.4L709.79 437.4L709.95 444.9L710.10 465.7L710.26 494.4L710.42 530.4L710.58 573.1L710.74 621.9L710.89 675.8L711.05 733.9L711.21 795.3L711.37 858.8L711.52 923.5ZM715.31 923.5L715.47 858.8L715.63 795.3L715.79 733.9L715.94 675.8L716.10 621.9L716.26 573.1L716.42 530.4L716.57 494.4L716.73 465.7L716.89 444.9L717.05 437.4L717.21 437.4L717.36 437.4L717.52 444.9L717.68 465.7L717.84 494.4L717.99 530.4L718.15 573.1L718.31 621.9L718.47 675.8L718.63 733.9L718.78 795.3L718.94 858.8L719.10 923.5ZM722.89 923.5L723.04 858.8L723.20 795.3L723.36 733.9L723.52 675.8L723.67 621.9L723.83 573.1L723.99 530.4L724.15 494.4L724.31 465.7L724.46 444.9L724.62 437.3L724.78 437.3L724.94 437.3L725.10 444.9L725.25 465.7L725.41 494.4L725.57 530.4L725.73 573.1L725.88 621.9L726.04 675.8L726.20 733.9L726.36 795.3L726.52 858.8L726.67 923.5ZM730.46 923.5L730.62 858.8L730.78 795.3L730.93 733.9L731.09 675.8L731.25 621.9L731.41 573.1L731.56 530.4L731.72 494.4L731.88 465.7L732.04 444.9L732.20 437.3L732.35 437.3L732.51 437.3L732.67 444.9L732.83 465.7L732.98 494.4L733.14 530.4L733.30 573.1L733.46 621.9L733.62 675.8L733.77 733.9L733.93 795.3L734.09 858.8L734.25 923.5ZM738.03 923.5L738.19 858.8L738.35 795.3L738.51 733.9L738.67 675.8L738.82 621.9L738.98 573.1L739.14 530.4L739.30 494.4L739.45 465.7L739.61 444.9L739.77 437.3L739.93 437.3L740.09 437.3L740.24 444.9L740.40 465.7L740.56 494.4L740.72 530.4L740.87 573.1L741.03 621.9L741.19 675.8L741.35 733.9L741.51 795.3L741.66 858.8L741.82 923.5ZM745.61 923.5L745.77 858.8L745.92 795.3L746.08 733.9L746.24 675.8L746.40 621.9L746.55 573.1L746.71 530.4L746.87 494.4L747.03 465.7L747.19 444.9L747.34 437.2L747.50 437.2L747.66 437.2L747.82 444.9L747.97 465.7L748.13 494.4L748.29 530.4L748.45 573.1L748.61 621.9L748.76 675.8L748.92 733.9L749.08 795.3L749.24 858.8L749.39 923.5ZM753.18 923.5L753.34 858.8L753.50 795.3L753.66 733.9L753.81 675.8L753.97 621.9L754.13 573.1L754.29 530.4L754.44 494.4L754.60 465.7L754.76 444.9L754.92 437.2L755.08 437.2L755.23 437.2L755.39 444.9L755.55 465.7L755.71 494.4L755.86 530.4L756.02 573.1L756.18 621.9L756.34 675.8L756.50 733.9L756.65 795.3L756.81 858.8L756.97 923.5ZM760.76 923.5L760.91 858.8L761.07 795.3L761.23 733.9L761.39 675.8L761.54 621.9L761.70 573.1L761.86 530.4L762.02 494.4L762.18 465.7L762.33 444.9L762.49 437.2L762.65 437.2L762.81 437.2L762.97 444.9L763.12 465.7L763.28 494.4L763.44 530.4L763.60 573.1L763.75 621.9L763.91 675.8L764.07 733.9L764.23 795.3L764.39 858.8L764.54 923.5ZM768.33 923.5L768.49 858.8L768.65 795.3L768.80 733.9L768.96 675.8L769.12 621.9L769.28 573.1L769.43 530.4L769.59 494.4L769.75 465.7L769.91 444.9L770.07 437.2L770.22 437.2L770.38 437.2L770.54 444.9L770.70 465.7L770.85 494.4L771.01 530.4L771.17 573.1L771.33 621.9L771.49 675.8L771.64 733.9L771.80 795.3L771.96 858.8L772.12 923.5ZM775.90 923.5L776.06 858.8L776.22 795.3L776.38 733.9L776.54 675.8L776.69 621.9L776.85 573.1L777.01 530.4L777.17 494.4L777.32 465.7L777.48 444.9L777.64 437.1L777.80 437.1L777.96 437.1L778.11 444.9L778.27 465.7L778.43 494.4L778.59 530.4L778.74 573.1L778.90 621.9L779.06 675.8L779.22 733.9L779.38 795.3L779.53 858.8L779.69 923.5ZM783.48 923.5L783.64 858.8L783.79 795.3L783.95 733.9L784.11 675.8L784.27 621.9L784.42 573.1L784.58 530.4L784.74 494.4L784.90 465.7L785.06 444.9L785.21 437.1L785.37 437.1L785.53 437.1L785.69 444.9L785.84 465.7L786.00 494.4L786.16 530.4L786.32 573.1L786.48 621.9L786.63 675.8L786.79 733.9L786.95 795.3L787.11 858.8L787.26 923.5ZM791.05 923.5L791.21 858.8L791.37 795.3L791.53 733.9L791.68 675.8L791.84 621.9L792.00 573.1L792.16 530.4L792.31 494.4L792.47 465.7L792.63 444.9L792.79 437.1L792.95 437.1L793.10 437.1L793.26 444.9L793.42 465.7L793.58 494.4L793.73 530.4L793.89 573.1L794.05 621.9L794.21 675.8L794.37 733.9L794.52 795.3L794.68 858.8L794.84 923.5ZM798.63 923.5L798.78 858.8L798.94 795.3L799.10 733.9L799.26 675.8L799.41 621.9L799.57 573.1L799.73 530.4L799.89 494.4L800.05 465.7L800.20 444.9L800.36 437.0L800.52 437.0L800.68 437.0L800.84 444.9L800.99 465.7L801.15 494.4L801.31 530.4L801.47 573.1L801.62 621.9L801.78 675.8L801.94 733.9L802.10 795.3L802.26 858.8L802.41 923.5Z" fill="#760a0a" shape-rendering="auto"/><path d="M199.5 430V615M199.5 925V973M351.5 430V550M351.5 925V973M502.5 430V830M502.5 925V973M654.5 430V820M654.5 925V973M806.5 430V973M958.5 430V973M1110.5 430V973M1261.5 430V973M1413.5 430V973M48 874.5H1565M48 825.5H1565M48 775.5H1565M48 726.5H1565M48 676.5H1565M48 627.5H1565M48 577.5H1565M48 528.5H1565M48 478.5H1565" stroke="#c8c8c8" stroke-dasharray="3 3" fill="none"/><path d="M47.00 923.5L48.80 923.5L48.96 858.8L49.12 795.3L49.27 733.9L49.43 675.8L49.59 621.9L49.75 573.1L49.90 530.4L50.06 494.4L50.22 465.7L50.38 444.9L50.54 440.0L50.69 440.0L50.85 440.0L51.01 444.9L51.17 465.7L51.32 494.4L51.48 530.4L51.64 573.1L51.80 621.9L51.96 675.8L52.11 733.9L52.27 795.3L52.43 858.8L52.59 923.5L56.37 923.5L56.37 923.5L56.53 858.8L56.69 795.3L56.85 733.9L57.01 675.8L57.16 621.9L57.32 573.1L57.48 530.4L57.64 494.4L57.79 465.7L57.95 444.9L58.11 440.0L58.27 440.0L58.43 440.0L58.58 444.9L58.74 465.7L58.90 494.4L59.06 530.4L59.21 573.1L59.37 621.9L59.53 675.8L59.69 733.9L59.85 795.3L60.00 858.8L60.16 923.5L63.95 923.5L63.95 923.5L64.11 858.8L64.26 795.3L64.42 733.9L64.58 675.8L64.74 621.9L64.89 573.1L65.05 530.4L65.21 494.4L65.37 465.7L65.53 444.9L65.68 439.9L65.84 439.9L66.00 439.9L66.16 444.9L66.31 465.7L66.47 494.4L66.63 530.4L66.79 573.1L66.95 621.9L67.10 675.8L67.26 733.9L67.42 795.3L67.58 858.8L67.73 923.5L71.52 923.5L71.52 923.5L71.68 858.8L71.84 795.3L72.00 733.9L72.15 675.8L72.31 621.9L72.47 573.1L72.63 530.4L72.78 494.4L72.94 465.7L73.10 444.9L73.26 439.9L73.42 439.9L73.57 439.9L73.73 444.9L73.89 465.7L74.05 494.4L74.20 530.4L74.36 573.1L74.52 621.9L74.68 675.8L74.84 733.9L74.99 795.3L75.15 858.8L75.31 923.5L79.10 923.5L79.10 923.5L79.25 858.8L79.41 795.3L79.57 733.9L79.73 675.8L79.88 621.9L80.04 573.1L80.20 530.4L80.36 494.4L80.52 465.7L80.67 444.9L80.83 439.9L80.99 439.9L81.15 439.9L81.31 444.9L81.46 465.7L81.62 494.4L81.78 530.4L81.94 573.1L82.09 621.9L82.25 675.8L82.41 733.9L82.57 795.3L82.73 858.8L82.88 923.5L86.67 923.5L86.67 923.5L86.83 858.8L86.99 795.3L87.14 733.9L87.30 675.8L87.46 621.9L87.62 573.1L87.77 530.4L87.93 494.4L88.09 465.7L88.25 444.9L88.41 439.8L88.56 439.8L88.72 439.8L88.88 444.9L89.04 465.7L89.19 494.4L89.35 530.4L89.51 573.1L89.67 621.9L89.83 675.8L89.98 733.9L90.14 795.3L90.30 858.8L90.46 923.5L94.24 923.5L94.24 923.5L94.40 858.8L94.56 795.3L94.72 733.9L94.88 675.8L95.03 621.9L95.19 573.1L95.35 530.4L95.51 494.4L95.66 465.7L95.82 444.9L95.98 439.8L96.14 439.8L96.30 439.8L96.45 444.9L96.61 465.7L96.77 494.4L96.93 530.4L97.08 573.1L97.24 621.9L97.40 675.8L97.56 733.9L97.72 795.3L97.87 858.8L98.03 923.5L101.82 923.5L101.82 923.5L101.98 858.8L102.13 795.3L102.29 733.9L102.45 675.8L102.61 621.9L102.76 573.1L102.92 530.4L103.08 494.4L103.24 465.7L103.40 444.9L103.55 439.8L103.71 439.8L103.87 439.8L104.03 444.9L104.18 465.7L104.34 494.4L104.50 530.4L104.66 573.1L104.82 621.9L104.97 675.8L105.13 733.9L105.29 795.3L105.45 858.8L105.61 923.5L109.39 923.5L109.39 923.5L109.55 858.8L109.71 795.3L109.87 733.9L110.02 675.8L110.18 621.9L110.34 573.1L110.50 530.4L110.65 494.4L110.81 465.7L110.97 444.9L111.13 439.8L111.29 439.8L111.44 439.8L111.60 444.9L111.76 465.7L111.92 494.4L112.07 530.4L112.23 573.1L112.39 621.9L112.55 675.8L112.71 733.9L112.86 795.3L113.02 858.8L113.18 923.5L116.97 923.5L116.97 923.5L117.12 858.8L117.28 795.3L117.44 733.9L117.60 675.8L117.75 621.9L117.91 573.1L118.07 530.4L118.23 494.4L118.39 465.7L118.54 444.9L118.70 439.7L118.86 439.7L119.02 439.7L119.18 444.9L119.33 465.7L119.49 494.4L119.65 530.4L119.81 573.1L119.96 621.9L120.12 675.8L120.28 733.9L120.44 795.3L120.60 858.8L120.75 923.5L124.54 923.5L124.54 923.5L124.70 858.8L124.86 795.3L125.01 733.9L125.17 675.8L125.33 621.9L125.49 573.1L125.64 530.4L125.80 494.4L125.96 465.7L126.12 444.9L126.28 439.7L126.43 439.7L126.59 439.7L126.75 444.9L126.91 465.7L127.06 494.4L127.22 530.4L127.38 573.1L127.54 621.9L127.70 675.8L127.85 733.9L128.01 795.3L128.17 858.8L128.33 923.5L132.11 923.5L132.11 923.5L132.27 858.8L132.43 795.3L132.59 733.9L132.75 675.8L132.90 621.9L133.06 573.1L133.22 530.4L133.38 494.4L133.53 465.7L133.69 444.9L133.85 439.7L134.01 439.7L134.17 439.7L134.32 444.9L134.48 465.7L134.64 494.4L134.80 530.4L134.95 573.1L135.11 621.9L135.27 675.8L135.43 733.9L135.59 795.3L135.74 858.8L135.90 923.5L139.69 923.5L139.69 923.5L139.85 858.8L140.00 795.3L140.16 733.9L140.32 675.8L140.48 621.9L140.63 573.1L140.79 530.4L140.95 494.4L141.11 465.7L141.27 444.9L141.42 439.6L141.58 439.6L141.74 439.6L141.90 444.9L142.05 465.7L142.21 494.4L142.37 530.4L142.53 573.1L142.69 621.9L142.84 675.8L143.00 733.9L143.16 795.3L143.32 858.8L143.47 923.5L147.26 923.5L147.26 923.5L147.42 858.8L147.58 795.3L147.74 733.9L147.89 675.8L148.05 621.9L148.21 573.1L148.37 530.4L148.52 494.4L148.68 465.7L148.84 444.9L149.00 439.6L149.16 439.6L149.31 439.6L149.47 444.9L149.63 465.7L149.79 494.4L149.94 530.4L150.10 573.1L150.26 621.9L150.42 675.8L150.58 733.9L150.73 795.3L150.89 858.8L151.05 923.5L154.84 923.5L154.84 923.5L154.99 858.8L155.15 795.3L155.31 733.9L155.47 675.8L155.62 621.9L155.78 573.1L155.94 530.4L156.10 494.4L156.26 465.7L156.41 444.9L156.57 439.6L156.73 439.6L156.89 439.6L157.05 444.9L157.20 465.7L157.36 494.4L157.52 530.4L157.68 573.1L157.83 621.9L157.99 675.8L158.15 733.9L158.31 795.3L158.47 858.8L158.62 923.5L162.41 923.5L162.41 923.5L162.57 858.8L162.73 795.3L162.88 733.9L163.04 675.8L163.20 621.9L163.36 573.1L163.51 530.4L163.67 494.4L163.83 465.7L163.99 444.9L164.15 439.5L164.30 439.5L164.46 439.5L164.62 444.9L164.78 465.7L164.93 494.4L165.09 530.4L165.25 573.1L165.41 621.9L165.57 675.8L165.72 733.9L165.88 795.3L166.04 858.8L166.20 923.5L169.98 923.5L169.98 923.5L170.14 858.8L170.30 795.3L170.46 733.9L170.62 675.8L170.77 621.9L170.93 573.1L171.09 530.4L171.25 494.4L171.40 465.7L171.56 444.9L171.72 439.5L171.88 439.5L172.04 439.5L172.19 444.9L172.35 465.7L172.51 494.4L172.67 530.4L172.82 573.1L172.98 621.9L173.14 675.8L173.30 733.9L173.46 795.3L173.61 858.8L173.77 923.5L177.56 923.5L177.56 923.5L177.72 858.8L177.87 795.3L178.03 733.9L178.19 675.8L178.35 621.9L178.50 573.1L178.66 530.4L178.82 494.4L178.98 465.7L179.14 444.9L179.29 439.5L179.45 439.5L179.61 439.5L179.77 444.9L179.92 465.7L180.08 494.4L180.24 530.4L180.40 573.1L180.56 621.9L180.71 675.8L180.87 733.9L181.03 795.3L181.19 858.8L181.34 923.5L185.13 923.5L185.13 923.5L185.29 858.8L185.45 795.3L185.61 733.9L185.76 675.8L185.92 621.9L186.08 573.1L186.24 530.4L186.39 494.4L186.55 465.7L186.71 444.9L186.87 439.5L187.03 439.5L187.18 439.5L187.34 444.9L187.50 465.7L187.66 494.4L187.81 530.4L187.97 573.1L188.13 621.9L188.29 675.8L188.45 733.9L188.60 795.3L188.76 858.8L188.92 923.5L192.71 923.5L192.71 923.5L192.86 858.8L193.02 795.3L193.18 733.9L193.34 675.8L193.49 621.9L193.65 573.1L193.81 530.4L193.97 494.4L194.13 465.7L194.28 444.9L194.44 439.4L194.60 439.4L194.76 439.4L194.92 444.9L195.07 465.7L195.23 494.4L195.39 530.4L195.55 573.1L195.70 621.9L195.86 675.8L196.02 733.9L196.18 795.3L196.34 858.8L196.49 923.5L200.28 923.5L200.28 923.5L200.44 858.8L200.60 795.3L200.75 733.9L200.91 675.8L201.07 621.9L201.23 573.1L201.38 530.4L201.54 494.4L201.70 465.7L201.86 444.9L202.02 439.4L202.17 439.4L202.33 439.4L202.49 444.9L202.65 465.7L202.80 494.4L202.96 530.4L203.12 573.1L203.28 621.9L203.44 675.8L203.59 733.9L203.75 795.3L203.91 858.8L204.07 923.5L207.85 923.5L207.85 923.5L208.01 858.8L208.17 795.3L208.33 733.9L208.49 675.8L208.64 621.9L208.80 573.1L208.96 530.4L209.12 494.4L209.27 465.7L209.43 444.9L209.59 439.4L209.75 439.4L209.91 439.4L210.06 444.9L210.22 465.7L210.38 494.4L210.54 530.4L210.69 573.1L210.85 621.9L211.01 675.8L211.17 733.9L211.33 795.3L211.48 858.8L211.64 923.5L215.43 923.5L215.43 923.5L215.59 858.8L215.74 795.3L215.90 733.9L216.06 675.8L216.22 621.9L216.37 573.1L216.53 530.4L216.69 494.4L216.85 465.7L217.01 444.9L217.16 439.3L217.32 439.3L217.48 439.3L217.64 444.9L217.79 465.7L217.95 494.4L218.11 530.4L218.27 573.1L218.43 621.9L218.58 675.8L218.74 733.9L218.90 795.3L219.06 858.8L219.22 923.5L223.00 923.5L223.00 923.5L223.16 858.8L223.32 795.3L223.48 733.9L223.63 675.8L223.79 621.9L223.95 573.1L224.11 530.4L224.26 494.4L224.42 465.7L224.58 444.9L224.74 439.3L224.90 439.3L225.05 439.3L225.21 444.9L225.37 465.7L225.53 494.4L225.68 530.4L225.84 573.1L226.00 621.9L226.16 675.8L226.32 733.9L226.47 795.3L226.63 858.8L226.79 923.5L230.58 923.5L230.58 923.5L230.73 858.8L230.89 795.3L231.05 733.9L231.21 675.8L231.36 621.9L231.52 573.1L231.68 530.4L231.84 494.4L232.00 465.7L232.15 444.9L232.31 439.3L232.47 439.3L232.63 439.3L232.79 444.9L232.94 465.7L233.10 494.4L233.26 530.4L233.42 573.1L233.57 621.9L233.73 675.8L233.89 733.9L234.05 795.3L234.21 858.8L234.36 923.5L238.15 923.5L238.15 923.5L238.31 858.8L238.47 795.3L238.62 733.9L238.78 675.8L238.94 621.9L239.10 573.1L239.25 530.4L239.41 494.4L239.57 465.7L239.73 444.9L239.89 439.2L240.04 439.2L240.20 439.2L240.36 444.9L240.52 465.7L240.67 494.4L240.83 530.4L240.99 573.1L241.15 621.9L241.31 675.8L241.46 733.9L241.62 795.3L241.78 858.8L241.94 923.5L245.72 923.5L245.72 923.5L245.88 858.8L246.04 795.3L246.20 733.9L246.36 675.8L246.51 621.9L246.67 573.1L246.83 530.4L246.99 494.4L247.14 465.7L247.30 444.9L247.46 439.2L247.62 439.2L247.78 439.2L247.93 444.9L248.09 465.7L248.25 494.4L248.41 530.4L248.56 573.1L248.72 621.9L248.88 675.8L249.04 733.9L249.20 795.3L249.35 858.8L249.51 923.5L253.30 923.5L253.30 923.5L253.46 858.8L253.61 795.3L253.77 733.9L253.93 675.8L254.09 621.9L254.24 573.1L254.40 530.4L254.56 494.4L254.72 465.7L254.88 444.9L255.03 439.2L255.19 439.2L255.35 439.2L255.51 444.9L255.66 465.7L255.82 494.4L255.98 530.4L256.14 573.1L256.30 621.9L256.45 675.8L256.61 733.9L256.77 795.3L256.93 858.8L257.08 923.5L260.87 923.5L260.87 923.5L261.03 858.8L261.19 795.3L261.35 733.9L261.50 675.8L261.66 621.9L261.82 573.1L261.98 530.4L262.13 494.4L262.29 465.7L262.45 444.9L262.61 439.2L262.77 439.2L262.92 439.2L263.08 444.9L263.24 465.7L263.40 494.4L263.55 530.4L263.71 573.1L263.87 621.9L264.03 675.8L264.19 733.9L264.34 795.3L264.50 858.8L264.66 923.5L268.45 923.5L268.45 923.5L268.60 858.8L268.76 795.3L268.92 733.9L269.08 675.8L269.23 621.9L269.39 573.1L269.55 530.4L269.71 494.4L269.87 465.7L270.02 444.9L270.18 439.1L270.34 439.1L270.50 439.1L270.66 444.9L270.81 465.7L270.97 494.4L271.13 530.4L271.29 573.1L271.44 621.9L271.60 675.8L271.76 733.9L271.92 795.3L272.08 858.8L272.23 923.5L276.02 923.5L276.02 923.5L276.18 858.8L276.34 795.3L276.49 733.9L276.65 675.8L276.81 621.9L276.97 573.1L277.12 530.4L277.28 494.4L277.44 465.7L277.60 444.9L277.76 439.1L277.91 439.1L278.07 439.1L278.23 444.9L278.39 465.7L278.54 494.4L278.70 530.4L278.86 573.1L279.02 621.9L279.18 675.8L279.33 733.9L279.49 795.3L279.65 858.8L279.81 923.5L283.59 923.5L283.59 923.5L283.75 858.8L283.91 795.3L284.07 733.9L284.23 675.8L284.38 621.9L284.54 573.1L284.70 530.4L284.86 494.4L285.01 465.7L285.17 444.9L285.33 439.1L285.49 439.1L285.65 439.1L285.80 444.9L285.96 465.7L286.12 494.4L286.28 530.4L286.43 573.1L286.59 621.9L286.75 675.8L286.91 733.9L287.07 795.3L287.22 858.8L287.38 923.5L291.17 923.5L291.17 923.5L291.33 858.8L291.48 795.3L291.64 733.9L291.80 675.8L291.96 621.9L292.11 573.1L292.27 530.4L292.43 494.4L292.59 465.7L292.75 444.9L292.90 439.0L293.06 439.0L293.22 439.0L293.38 444.9L293.53 465.7L293.69 494.4L293.85 530.4L294.01 573.1L294.17 621.9L294.32 675.8L294.48 733.9L294.64 795.3L294.80 858.8L294.95 923.5L298.74 923.5L298.74 923.5L298.90 858.8L299.06 795.3L299.22 733.9L299.37 675.8L299.53 621.9L299.69 573.1L299.85 530.4L300.00 494.4L300.16 465.7L300.32 444.9L300.48 439.0L300.64 439.0L300.79 439.0L300.95 444.9L301.11 465.7L301.27 494.4L301.42 530.4L301.58 573.1L301.74 621.9L301.90 675.8L302.06 733.9L302.21 795.3L302.37 858.8L302.53 923.5L306.32 923.5L306.32 923.5L306.47 858.8L306.63 795.3L306.79 733.9L306.95 675.8L307.10 621.9L307.26 573.1L307.42 530.4L307.58 494.4L307.74 465.7L307.89 444.9L308.05 439.0L308.21 439.0L308.37 439.0L308.53 444.9L308.68 465.7L308.84 494.4L309.00 530.4L309.16 573.1L309.31 621.9L309.47 675.8L309.63 733.9L309.79 795.3L309.95 858.8L310.10 923.5L313.89 923.5L313.89 923.5L314.05 858.8L314.21 795.3L314.36 733.9L314.52 675.8L314.68 621.9L314.84 573.1L314.99 530.4L315.15 494.4L315.31 465.7L315.47 444.9L315.63 438.9L315.78 438.9L315.94 438.9L316.10 444.9L316.26 465.7L316.41 494.4L316.57 530.4L316.73 573.1L316.89 621.9L317.05 675.8L317.20 733.9L317.36 795.3L317.52 858.8L317.68 923.5L321.46 923.5L321.46 923.5L321.62 858.8L321.78 795.3L321.94 733.9L322.10 675.8L322.25 621.9L322.41 573.1L322.57 530.4L322.73 494.4L322.88 465.7L323.04 444.9L323.20 438.9L323.36 438.9L323.52 438.9L323.67 444.9L323.83 465.7L323.99 494.4L324.15 530.4L324.30 573.1L324.46 621.9L324.62 675.8L324.78 733.9L324.94 795.3L325.09 858.8L325.25 923.5L329.04 923.5L329.04 923.5L329.20 858.8L329.35 795.3L329.51 733.9L329.67 675.8L329.83 621.9L329.98 573.1L330.14 530.4L330.30 494.4L330.46 465.7L330.62 444.9L330.77 438.9L330.93 438.9L331.09 438.9L331.25 444.9L331.40 465.7L331.56 494.4L331.72 530.4L331.88 573.1L332.04 621.9L332.19 675.8L332.35 733.9L332.51 795.3L332.67 858.8L332.82 923.5L336.61 923.5L336.61 923.5L336.77 858.8L336.93 795.3L337.09 733.9L337.24 675.8L337.40 621.9L337.56 573.1L337.72 530.4L337.87 494.4L338.03 465.7L338.19 444.9L338.35 438.9L338.51 438.9L338.66 438.9L338.82 444.9L338.98 465.7L339.14 494.4L339.29 530.4L339.45 573.1L339.61 621.9L339.77 675.8L339.93 733.9L340.08 795.3L340.24 858.8L340.40 923.5L344.19 923.5L344.19 923.5L344.34 858.8L344.50 795.3L344.66 733.9L344.82 675.8L344.97 621.9L345.13 573.1L345.29 530.4L345.45 494.4L345.61 465.7L345.76 444.9L345.92 438.8L346.08 438.8L346.24 438.8L346.40 444.9L346.55 465.7L346.71 494.4L346.87 530.4L347.03 573.1L347.18 621.9L347.34 675.8L347.50 733.9L347.66 795.3L347.82 858.8L347.97 923.5L351.76 923.5L351.76 923.5L351.92 858.8L352.08 795.3L352.23 733.9L352.39 675.8L352.55 621.9L352.71 573.1L352.86 530.4L353.02 494.4L353.18 465.7L353.34 444.9L353.50 438.8L353.65 438.8L353.81 438.8L353.97 444.9L354.13 465.7L354.28 494.4L354.44 530.4L354.60 573.1L354.76 621.9L354.92 675.8L355.07 733.9L355.23 795.3L355.39 858.8L355.55 923.5L359.33 923.5L359.33 923.5L359.49 858.8L359.65 795.3L359.81 733.9L359.97 675.8L360.12 621.9L360.28 573.1L360.44 530.4L360.60 494.4L360.75 465.7L360.91 444.9L361.07 438.8L361.23 438.8L361.39 438.8L361.54 444.9L361.70 465.7L361.86 494.4L362.02 530.4L362.17 573.1L362.33 621.9L362.49 675.8L362.65 733.9L362.81 795.3L362.96 858.8L363.12 923.5L366.91 923.5L366.91 923.5L367.07 858.8L367.22 795.3L367.38 733.9L367.54 675.8L367.70 621.9L367.85 573.1L368.01 530.4L368.17 494.4L368.33 465.7L368.49 444.9L368.64 438.7L368.80 438.7L368.96 438.7L369.12 444.9L369.27 465.7L369.43 494.4L369.59 530.4L369.75 573.1L369.91 621.9L370.06 675.8L370.22 733.9L370.38 795.3L370.54 858.8L370.69 923.5L374.48 923.5L374.48 923.5L374.64 858.8L374.80 795.3L374.96 733.9L375.11 675.8L375.27 621.9L375.43 573.1L375.59 530.4L375.74 494.4L375.90 465.7L376.06 444.9L376.22 438.7L376.38 438.7L376.53 438.7L376.69 444.9L376.85 465.7L377.01 494.4L377.16 530.4L377.32 573.1L377.48 621.9L377.64 675.8L377.80 733.9L377.95 795.3L378.11 858.8L378.27 923.5L382.06 923.5L382.06 923.5L382.21 858.8L382.37 795.3L382.53 733.9L382.69 675.8L382.84 621.9L383.00 573.1L383.16 530.4L383.32 494.4L383.48 465.7L383.63 444.9L383.79 438.7L383.95 438.7L384.11 438.7L384.27 444.9L384.42 465.7L384.58 494.4L384.74 530.4L384.90 573.1L385.05 621.9L385.21 675.8L385.37 733.9L385.53 795.3L385.69 858.8L385.84 923.5L389.63 923.5L389.63 923.5L389.79 858.8L389.95 795.3L390.10 733.9L390.26 675.8L390.42 621.9L390.58 573.1L390.73 530.4L390.89 494.4L391.05 465.7L391.21 444.9L391.37 438.6L391.52 438.6L391.68 438.6L391.84 444.9L392.00 465.7L392.15 494.4L392.31 530.4L392.47 573.1L392.63 621.9L392.79 675.8L392.94 733.9L393.10 795.3L393.26 858.8L393.42 923.5L397.20 923.5L397.20 923.5L397.36 858.8L397.52 795.3L397.68 733.9L397.84 675.8L397.99 621.9L398.15 573.1L398.31 530.4L398.47 494.4L398.62 465.7L398.78 444.9L398.94 438.6L399.10 438.6L399.26 438.6L399.41 444.9L399.57 465.7L399.73 494.4L399.89 530.4L400.04 573.1L400.20 621.9L400.36 675.8L400.52 733.9L400.68 795.3L400.83 858.8L400.99 923.5L404.78 923.5L404.78 923.5L404.94 858.8L405.09 795.3L405.25 733.9L405.41 675.8L405.57 621.9L405.72 573.1L405.88 530.4L406.04 494.4L406.20 465.7L406.36 444.9L406.51 438.6L406.67 438.6L406.83 438.6L406.99 444.9L407.14 465.7L407.30 494.4L407.46 530.4L407.62 573.1L407.78 621.9L407.93 675.8L408.09 733.9L408.25 795.3L408.41 858.8L408.56 923.5L412.35 923.5L412.35 923.5L412.51 858.8L412.67 795.3L412.83 733.9L412.98 675.8L413.14 621.9L413.30 573.1L413.46 530.4L413.61 494.4L413.77 465.7L413.93 444.9L414.09 438.6L414.25 438.6L414.40 438.6L414.56 444.9L414.72 465.7L414.88 494.4L415.03 530.4L415.19 573.1L415.35 621.9L415.51 675.8L415.67 733.9L415.82 795.3L415.98 858.8L416.14 923.5L419.93 923.5L419.93 923.5L420.08 858.8L420.24 795.3L420.40 733.9L420.56 675.8L420.71 621.9L420.87 573.1L421.03 530.4L421.19 494.4L421.35 465.7L421.50 444.9L421.66 438.5L421.82 438.5L421.98 438.5L422.14 444.9L422.29 465.7L422.45 494.4L422.61 530.4L422.77 573.1L422.92 621.9L423.08 675.8L423.24 733.9L423.40 795.3L423.56 858.8L423.71 923.5L427.50 923.5L427.50 923.5L427.66 858.8L427.82 795.3L427.97 733.9L428.13 675.8L428.29 621.9L428.45 573.1L428.60 530.4L428.76 494.4L428.92 465.7L429.08 444.9L429.24 438.5L429.39 438.5L429.55 438.5L429.71 444.9L429.87 465.7L430.02 494.4L430.18 530.4L430.34 573.1L430.50 621.9L430.66 675.8L430.81 733.9L430.97 795.3L431.13 858.8L431.29 923.5L435.07 923.5L435.07 923.5L435.23 858.8L435.39 795.3L435.55 733.9L435.71 675.8L435.86 621.9L436.02 573.1L436.18 530.4L436.34 494.4L436.49 465.7L436.65 444.9L436.81 438.5L436.97 438.5L437.13 438.5L437.28 444.9L437.44 465.7L437.60 494.4L437.76 530.4L437.91 573.1L438.07 621.9L438.23 675.8L438.39 733.9L438.55 795.3L438.70 858.8L438.86 923.5L442.65 923.5L442.65 923.5L442.81 858.8L442.96 795.3L443.12 733.9L443.28 675.8L443.44 621.9L443.59 573.1L443.75 530.4L443.91 494.4L444.07 465.7L444.23 444.9L444.38 438.4L444.54 438.4L444.70 438.4L444.86 444.9L445.01 465.7L445.17 494.4L445.33 530.4L445.49 573.1L445.65 621.9L445.80 675.8L445.96 733.9L446.12 795.3L446.28 858.8L446.44 923.5L450.22 923.5L450.22 923.5L450.38 858.8L450.54 795.3L450.70 733.9L450.85 675.8L451.01 621.9L451.17 573.1L451.33 530.4L451.48 494.4L451.64 465.7L451.80 444.9L451.96 438.4L452.12 438.4L452.27 438.4L452.43 444.9L452.59 465.7L452.75 494.4L452.90 530.4L453.06 573.1L453.22 621.9L453.38 675.8L453.54 733.9L453.69 795.3L453.85 858.8L454.01 923.5L457.80 923.5L457.80 923.5L457.95 858.8L458.11 795.3L458.27 733.9L458.43 675.8L458.58 621.9L458.74 573.1L458.90 530.4L459.06 494.4L459.22 465.7L459.37 444.9L459.53 438.4L459.69 438.4L459.85 438.4L460.01 444.9L460.16 465.7L460.32 494.4L460.48 530.4L460.64 573.1L460.79 621.9L460.95 675.8L461.11 733.9L461.27 795.3L461.43 858.8L461.58 923.5L465.37 923.5L465.37 923.5L465.53 858.8L465.69 795.3L465.84 733.9L466.00 675.8L466.16 621.9L466.32 573.1L466.47 530.4L466.63 494.4L466.79 465.7L466.95 444.9L467.11 438.3L467.26 438.3L467.42 438.3L467.58 444.9L467.74 465.7L467.89 494.4L468.05 530.4L468.21 573.1L468.37 621.9L468.53 675.8L468.68 733.9L468.84 795.3L469.00 858.8L469.16 923.5L472.94 923.5L472.94 923.5L473.10 858.8L473.26 795.3L473.42 733.9L473.58 675.8L473.73 621.9L473.89 573.1L474.05 530.4L474.21 494.4L474.36 465.7L474.52 444.9L474.68 438.3L474.84 438.3L475.00 438.3L475.15 444.9L475.31 465.7L475.47 494.4L475.63 530.4L475.78 573.1L475.94 621.9L476.10 675.8L476.26 733.9L476.42 795.3L476.57 858.8L476.73 923.5L480.52 923.5L480.52 923.5L480.68 858.8L480.83 795.3L480.99 733.9L481.15 675.8L481.31 621.9L481.46 573.1L481.62 530.4L481.78 494.4L481.94 465.7L482.10 444.9L482.25 438.3L482.41 438.3L482.57 438.3L482.73 444.9L482.88 465.7L483.04 494.4L483.20 530.4L483.36 573.1L483.52 621.9L483.67 675.8L483.83 733.9L483.99 795.3L484.15 858.8L484.31 923.5L488.09 923.5L488.09 923.5L488.25 858.8L488.41 795.3L488.57 733.9L488.72 675.8L488.88 621.9L489.04 573.1L489.20 530.4L489.35 494.4L489.51 465.7L489.67 444.9L489.83 438.3L489.99 438.3L490.14 438.3L490.30 444.9L490.46 465.7L490.62 494.4L490.77 530.4L490.93 573.1L491.09 621.9L491.25 675.8L491.41 733.9L491.56 795.3L491.72 858.8L491.88 923.5L495.67 923.5L495.67 923.5L495.82 858.8L495.98 795.3L496.14 733.9L496.30 675.8L496.45 621.9L496.61 573.1L496.77 530.4L496.93 494.4L497.09 465.7L497.24 444.9L497.40 438.2L497.56 438.2L497.72 438.2L497.88 444.9L498.03 465.7L498.19 494.4L498.35 530.4L498.51 573.1L498.66 621.9L498.82 675.8L498.98 733.9L499.14 795.3L499.30 858.8L499.45 923.5L503.24 923.5L503.24 923.5L503.40 858.8L503.56 795.3L503.71 733.9L503.87 675.8L504.03 621.9L504.19 573.1L504.34 530.4L504.50 494.4L504.66 465.7L504.82 444.9L504.98 438.2L505.13 438.2L505.29 438.2L505.45 444.9L505.61 465.7L505.76 494.4L505.92 530.4L506.08 573.1L506.24 621.9L506.40 675.8L506.55 733.9L506.71 795.3L506.87 858.8L507.03 923.5L510.81 923.5L510.81 923.5L510.97 858.8L511.13 795.3L511.29 733.9L511.45 675.8L511.60 621.9L511.76 573.1L511.92 530.4L512.08 494.4L512.23 465.7L512.39 444.9L512.55 438.2L512.71 438.2L512.87 438.2L513.02 444.9L513.18 465.7L513.34 494.4L513.50 530.4L513.65 573.1L513.81 621.9L513.97 675.8L514.13 733.9L514.29 795.3L514.44 858.8L514.60 923.5L518.39 923.5L518.39 923.5L518.55 858.8L518.70 795.3L518.86 733.9L519.02 675.8L519.18 621.9L519.33 573.1L519.49 530.4L519.65 494.4L519.81 465.7L519.97 444.9L520.12 438.1L520.28 438.1L520.44 438.1L520.60 444.9L520.75 465.7L520.91 494.4L521.07 530.4L521.23 573.1L521.39 621.9L521.54 675.8L521.70 733.9L521.86 795.3L522.02 858.8L522.17 923.5L525.96 923.5L525.96 923.5L526.12 858.8L526.28 795.3L526.44 733.9L526.59 675.8L526.75 621.9L526.91 573.1L527.07 530.4L527.22 494.4L527.38 465.7L527.54 444.9L527.70 438.1L527.86 438.1L528.01 438.1L528.17 444.9L528.33 465.7L528.49 494.4L528.64 530.4L528.80 573.1L528.96 621.9L529.12 675.8L529.28 733.9L529.43 795.3L529.59 858.8L529.75 923.5L533.54 923.5L533.54 923.5L533.69 858.8L533.85 795.3L534.01 733.9L534.17 675.8L534.32 621.9L534.48 573.1L534.64 530.4L534.80 494.4L534.96 465.7L535.11 444.9L535.27 438.1L535.43 438.1L535.59 438.1L535.75 444.9L535.90 465.7L536.06 494.4L536.22 530.4L536.38 573.1L536.53 621.9L536.69 675.8L536.85 733.9L537.01 795.3L537.17 858.8L537.32 923.5L541.11 923.5L541.11 923.5L541.27 858.8L541.43 795.3L541.58 733.9L541.74 675.8L541.90 621.9L542.06 573.1L542.21 530.4L542.37 494.4L542.53 465.7L542.69 444.9L542.85 438.0L543.00 438.0L543.16 438.0L543.32 444.9L543.48 465.7L543.63 494.4L543.79 530.4L543.95 573.1L544.11 621.9L544.27 675.8L544.42 733.9L544.58 795.3L544.74 858.8L544.90 923.5L548.68 923.5L548.68 923.5L548.84 858.8L549.00 795.3L549.16 733.9L549.32 675.8L549.47 621.9L549.63 573.1L549.79 530.4L549.95 494.4L550.10 465.7L550.26 444.9L550.42 438.0L550.58 438.0L550.74 438.0L550.89 444.9L551.05 465.7L551.21 494.4L551.37 530.4L551.52 573.1L551.68 621.9L551.84 675.8L552.00 733.9L552.16 795.3L552.31 858.8L552.47 923.5L556.26 923.5L556.26 923.5L556.42 858.8L556.57 795.3L556.73 733.9L556.89 675.8L557.05 621.9L557.20 573.1L557.36 530.4L557.52 494.4L557.68 465.7L557.84 444.9L557.99 438.0L558.15 438.0L558.31 438.0L558.47 444.9L558.62 465.7L558.78 494.4L558.94 530.4L559.10 573.1L559.26 621.9L559.41 675.8L559.57 733.9L559.73 795.3L559.89 858.8L560.04 923.5L563.83 923.5L563.83 923.5L563.99 858.8L564.15 795.3L564.31 733.9L564.46 675.8L564.62 621.9L564.78 573.1L564.94 530.4L565.09 494.4L565.25 465.7L565.41 444.9L565.57 438.0L565.73 438.0L565.88 438.0L566.04 444.9L566.20 465.7L566.36 494.4L566.51 530.4L566.67 573.1L566.83 621.9L566.99 675.8L567.15 733.9L567.30 795.3L567.46 858.8L567.62 923.5L571.41 923.5L571.41 923.5L571.56 858.8L571.72 795.3L571.88 733.9L572.04 675.8L572.19 621.9L572.35 573.1L572.51 530.4L572.67 494.4L572.83 465.7L572.98 444.9L573.14 437.9L573.30 437.9L573.46 437.9L573.62 444.9L573.77 465.7L573.93 494.4L574.09 530.4L574.25 573.1L574.40 621.9L574.56 675.8L574.72 733.9L574.88 795.3L575.04 858.8L575.19 923.5L578.98 923.5L578.98 923.5L579.14 858.8L579.30 795.3L579.45 733.9L579.61 675.8L579.77 621.9L579.93 573.1L580.08 530.4L580.24 494.4L580.40 465.7L580.56 444.9L580.72 437.9L580.87 437.9L581.03 437.9L581.19 444.9L581.35 465.7L581.50 494.4L581.66 530.4L581.82 573.1L581.98 621.9L582.14 675.8L582.29 733.9L582.45 795.3L582.61 858.8L582.77 923.5L586.55 923.5L586.55 923.5L586.71 858.8L586.87 795.3L587.03 733.9L587.19 675.8L587.34 621.9L587.50 573.1L587.66 530.4L587.82 494.4L587.97 465.7L588.13 444.9L588.29 437.9L588.45 437.9L588.61 437.9L588.76 444.9L588.92 465.7L589.08 494.4L589.24 530.4L589.39 573.1L589.55 621.9L589.71 675.8L589.87 733.9L590.03 795.3L590.18 858.8L590.34 923.5L594.13 923.5L594.13 923.5L594.29 858.8L594.44 795.3L594.60 733.9L594.76 675.8L594.92 621.9L595.07 573.1L595.23 530.4L595.39 494.4L595.55 465.7L595.71 444.9L595.86 437.8L596.02 437.8L596.18 437.8L596.34 444.9L596.49 465.7L596.65 494.4L596.81 530.4L596.97 573.1L597.13 621.9L597.28 675.8L597.44 733.9L597.60 795.3L597.76 858.8L597.91 923.5L601.70 923.5L601.70 923.5L601.86 858.8L602.02 795.3L602.18 733.9L602.33 675.8L602.49 621.9L602.65 573.1L602.81 530.4L602.96 494.4L603.12 465.7L603.28 444.9L603.44 437.8L603.60 437.8L603.75 437.8L603.91 444.9L604.07 465.7L604.23 494.4L604.38 530.4L604.54 573.1L604.70 621.9L604.86 675.8L605.02 733.9L605.17 795.3L605.33 858.8L605.49 923.5L609.28 923.5L609.28 923.5L609.43 858.8L609.59 795.3L609.75 733.9L609.91 675.8L610.06 621.9L610.22 573.1L610.38 530.4L610.54 494.4L610.70 465.7L610.85 444.9L611.01 437.8L611.17 437.8L611.33 437.8L611.49 444.9L611.64 465.7L611.80 494.4L611.96 530.4L612.12 573.1L612.27 621.9L612.43 675.8L612.59 733.9L612.75 795.3L612.91 858.8L613.06 923.5L616.85 923.5L616.85 923.5L617.01 858.8L617.17 795.3L617.32 733.9L617.48 675.8L617.64 621.9L617.80 573.1L617.95 530.4L618.11 494.4L618.27 465.7L618.43 444.9L618.59 437.8L618.74 437.8L618.90 437.8L619.06 444.9L619.22 465.7L619.37 494.4L619.53 530.4L619.69 573.1L619.85 621.9L620.01 675.8L620.16 733.9L620.32 795.3L620.48 858.8L620.64 923.5L624.42 923.5L624.42 923.5L624.58 858.8L624.74 795.3L624.90 733.9L625.06 675.8L625.21 621.9L625.37 573.1L625.53 530.4L625.69 494.4L625.84 465.7L626.00 444.9L626.16 437.7L626.32 437.7L626.48 437.7L626.63 444.9L626.79 465.7L626.95 494.4L627.11 530.4L627.26 573.1L627.42 621.9L627.58 675.8L627.74 733.9L627.90 795.3L628.05 858.8L628.21 923.5L632.00 923.5L632.00 923.5L632.16 858.8L632.31 795.3L632.47 733.9L632.63 675.8L632.79 621.9L632.94 573.1L633.10 530.4L633.26 494.4L633.42 465.7L633.58 444.9L633.73 437.7L633.89 437.7L634.05 437.7L634.21 444.9L634.36 465.7L634.52 494.4L634.68 530.4L634.84 573.1L635.00 621.9L635.15 675.8L635.31 733.9L635.47 795.3L635.63 858.8L635.78 923.5L639.57 923.5L639.57 923.5L639.73 858.8L639.89 795.3L640.05 733.9L640.20 675.8L640.36 621.9L640.52 573.1L640.68 530.4L640.83 494.4L640.99 465.7L641.15 444.9L641.31 437.7L641.47 437.7L641.62 437.7L641.78 444.9L641.94 465.7L642.10 494.4L642.25 530.4L642.41 573.1L642.57 621.9L642.73 675.8L642.89 733.9L643.04 795.3L643.20 858.8L643.36 923.5L647.15 923.5L647.15 923.5L647.30 858.8L647.46 795.3L647.62 733.9L647.78 675.8L647.93 621.9L648.09 573.1L648.25 530.4L648.41 494.4L648.57 465.7L648.72 444.9L648.88 437.6L649.04 437.6L649.20 437.6L649.36 444.9L649.51 465.7L649.67 494.4L649.83 530.4L649.99 573.1L650.14 621.9L650.30 675.8L650.46 733.9L650.62 795.3L650.78 858.8L650.93 923.5L654.72 923.5L654.72 923.5L654.88 858.8L655.04 795.3L655.19 733.9L655.35 675.8L655.51 621.9L655.67 573.1L655.82 530.4L655.98 494.4L656.14 465.7L656.30 444.9L656.46 437.6L656.61 437.6L656.77 437.6L656.93 444.9L657.09 465.7L657.24 494.4L657.40 530.4L657.56 573.1L657.72 621.9L657.88 675.8L658.03 733.9L658.19 795.3L658.35 858.8L658.51 923.5L662.29 923.5L662.29 923.5L662.45 858.8L662.61 795.3L662.77 733.9L662.93 675.8L663.08 621.9L663.24 573.1L663.40 530.4L663.56 494.4L663.71 465.7L663.87 444.9L664.03 437.6L664.19 437.6L664.35 437.6L664.50 444.9L664.66 465.7L664.82 494.4L664.98 530.4L665.13 573.1L665.29 621.9L665.45 675.8L665.61 733.9L665.77 795.3L665.92 858.8L666.08 923.5L669.87 923.5L669.87 923.5L670.03 858.8L670.18 795.3L670.34 733.9L670.50 675.8L670.66 621.9L670.81 573.1L670.97 530.4L671.13 494.4L671.29 465.7L671.45 444.9L671.60 437.5L671.76 437.5L671.92 437.5L672.08 444.9L672.23 465.7L672.39 494.4L672.55 530.4L672.71 573.1L672.87 621.9L673.02 675.8L673.18 733.9L673.34 795.3L673.50 858.8L673.65 923.5L677.44 923.5L677.44 923.5L677.60 858.8L677.76 795.3L677.92 733.9L678.07 675.8L678.23 621.9L678.39 573.1L678.55 530.4L678.70 494.4L678.86 465.7L679.02 444.9L679.18 437.5L679.34 437.5L679.49 437.5L679.65 444.9L679.81 465.7L679.97 494.4L680.12 530.4L680.28 573.1L680.44 621.9L680.60 675.8L680.76 733.9L680.91 795.3L681.07 858.8L681.23 923.5L685.02 923.5L685.02 923.5L685.17 858.8L685.33 795.3L685.49 733.9L685.65 675.8L685.80 621.9L685.96 573.1L686.12 530.4L686.28 494.4L686.44 465.7L686.59 444.9L686.75 437.5L686.91 437.5L687.07 437.5L687.23 444.9L687.38 465.7L687.54 494.4L687.70 530.4L687.86 573.1L688.01 621.9L688.17 675.8L688.33 733.9L688.49 795.3L688.65 858.8L688.80 923.5L692.59 923.5L692.59 923.5L692.75 858.8L692.91 795.3L693.06 733.9L693.22 675.8L693.38 621.9L693.54 573.1L693.69 530.4L693.85 494.4L694.01 465.7L694.17 444.9L694.33 437.5L694.48 437.5L694.64 437.5L694.80 444.9L694.96 465.7L695.11 494.4L695.27 530.4L695.43 573.1L695.59 621.9L695.75 675.8L695.90 733.9L696.06 795.3L696.22 858.8L696.38 923.5L700.16 923.5L700.16 923.5L700.32 858.8L700.48 795.3L700.64 733.9L700.80 675.8L700.95 621.9L701.11 573.1L701.27 530.4L701.43 494.4L701.58 465.7L701.74 444.9L701.90 437.4L702.06 437.4L702.22 437.4L702.37 444.9L702.53 465.7L702.69 494.4L702.85 530.4L703.00 573.1L703.16 621.9L703.32 675.8L703.48 733.9L703.64 795.3L703.79 858.8L703.95 923.5L707.74 923.5L707.74 923.5L707.90 858.8L708.05 795.3L708.21 733.9L708.37 675.8L708.53 621.9L708.68 573.1L708.84 530.4L709.00 494.4L709.16 465.7L709.32 444.9L709.47 437.4L709.63 437.4L709.79 437.4L709.95 444.9L710.10 465.7L710.26 494.4L710.42 530.4L710.58 573.1L710.74 621.9L710.89 675.8L711.05 733.9L711.21 795.3L711.37 858.8L711.52 923.5L715.31 923.5L715.31 923.5L715.47 858.8L715.63 795.3L715.79 733.9L715.94 675.8L716.10 621.9L716.26 573.1L716.42 530.4L716.57 494.4L716.73 465.7L716.89 444.9L717.05 437.4L717.21 437.4L717.36 437.4L717.52 444.9L717.68 465.7L717.84 494.4L717.99 530.4L718.15 573.1L718.31 621.9L718.47 675.8L718.63 733.9L718.78 795.3L718.94 858.8L719.10 923.5L722.89 923.5L722.89 923.5L723.04 858.8L723.20 795.3L723.36 733.9L723.52 675.8L723.67 621.9L723.83 573.1L723.99 530.4L724.15 494.4L724.31 465.7L724.46 444.9L724.62 437.3L724.78 437.3L724.94 437.3L725.10 444.9L725.25 465.7L725.41 494.4L725.57 530.4L725.73 573.1L725.88 621.9L726.04 675.8L726.20 733.9L726.36 795.3L726.52 858.8L726.67 923.5L730.46 923.5L730.46 923.5L730.62 858.8L730.78 795.3L730.93 733.9L731.09 675.8L731.25 621.9L731.41 573.1L731.56 530.4L731.72 494.4L731.88 465.7L732.04 444.9L732.20 437.3L732.35 437.3L732.51 437.3L732.67 444.9L732.83 465.7L732.98 494.4L733.14 530.4L733.30 573.1L733.46 621.9L733.62 675.8L733.77 733.9L733.93 795.3L734.09 858.8L734.25 923.5L738.03 923.5L738.03 923.5L738.19 858.8L738.35 795.3L738.51 733.9L738.67 675.8L738.82 621.9L738.98 573.1L739.14 530.4L739.30 494.4L739.45 465.7L739.61 444.9L739.77 437.3L739.93 437.3L740.09 437.3L740.24 444.9L740.40 465.7L740.56 494.4L740.72 530.4L740.87 573.1L741.03 621.9L741.19 675.8L741.35 733.9L741.51 795.3L741.66 858.8L741.82 923.5L745.61 923.5L745.61 923.5L745.77 858.8L745.92 795.3L746.08 733.9L746.24 675.8L746.40 621.9L746.55 573.1L746.71 530.4L746.87 494.4L747.03 465.7L747.19 444.9L747.34 437.2L747.50 437.2L747.66 437.2L747.82 444.9L747.97 465.7L748.13 494.4L748.29 530.4L748.45 573.1L748.61 621.9L748.76 675.8L748.92 733.9L749.08 795.3L749.24 858.8L749.39 923.5L753.18 923.5L753.18 923.5L753.34 858.8L753.50 795.3L753.66 733.9L753.81 675.8L753.97 621.9L754.13 573.1L754.29 530.4L754.44 494.4L754.60 465.7L754.76 444.9L754.92 437.2L755.08 437.2L755.23 437.2L755.39 444.9L755.55 465.7L755.71 494.4L755.86 530.4L756.02 573.1L756.18 621.9L756.34 675.8L756.50 733.9L756.65 795.3L756.81 858.8L756.97 923.5L760.76 923.5L760.76 923.5L760.91 858.8L761.07 795.3L761.23 733.9L761.39 675.8L761.54 621.9L761.70 573.1L761.86 530.4L762.02 494.4L762.18 465.7L762.33 444.9L762.49 437.2L762.65 437.2L762.81 437.2L762.97 444.9L763.12 465.7L763.28 494.4L763.44 530.4L763.60 573.1L763.75 621.9L763.91 675.8L764.07 733.9L764.23 795.3L764.39 858.8L764.54 923.5L768.33 923.5L768.33 923.5L768.49 858.8L768.65 795.3L768.80 733.9L768.96 675.8L769.12 621.9L769.28 573.1L769.43 530.4L769.59 494.4L769.75 465.7L769.91 444.9L770.07 437.2L770.22 437.2L770.38 437.2L770.54 444.9L770.70 465.7L770.85 494.4L771.01 530.4L771.17 573.1L771.33 621.9L771.49 675.8L771.64 733.9L771.80 795.3L771.96 858.8L772.12 923.5L775.90 923.5L775.90 923.5L776.06 858.8L776.22 795.3L776.38 733.9L776.54 675.8L776.69 621.9L776.85 573.1L777.01 530.4L777.17 494.4L777.32 465.7L777.48 444.9L777.64 437.1L777.80 437.1L777.96 437.1L778.11 444.9L778.27 465.7L778.43 494.4L778.59 530.4L778.74 573.1L778.90 621.9L779.06 675.8L779.22 733.9L779.38 795.3L779.53 858.8L779.69 923.5L783.48 923.5L783.48 923.5L783.64 858.8L783.79 795.3L783.95 733.9L784.11 675.8L784.27 621.9L784.42 573.1L784.58 530.4L784.74 494.4L784.90 465.7L785.06 444.9L785.21 437.1L785.37 437.1L785.53 437.1L785.69 444.9L785.84 465.7L786.00 494.4L786.16 530.4L786.32 573.1L786.48 621.9L786.63 675.8L786.79 733.9L786.95 795.3L787.11 858.8L787.26 923.5L791.05 923.5L791.05 923.5L791.21 858.8L791.37 795.3L791.53 733.9L791.68 675.8L791.84 621.9L792.00 573.1L792.16 530.4L792.31 494.4L792.47 465.7L792.63 444.9L792.79 437.1L792.95 437.1L793.10 437.1L793.26 444.9L793.42 465.7L793.58 494.4L793.73 530.4L793.89 573.1L794.05 621.9L794.21 675.8L794.37 733.9L794.52 795.3L794.68 858.8L794.84 923.5L798.63 923.5L798.63 923.5L798.78 858.8L798.94 795.3L799.10 733.9L799.26 675.8L799.41 621.9L799.57 573.1L799.73 530.4L799.89 494.4L800.05 465.7L800.20 444.9L800.36 437.0L800.52 437.0L800.68 437.0L800.84 444.9L800.99 465.7L801.15 494.4L801.31 530.4L801.47 573.1L801.62 621.9L801.78 675.8L801.94 733.9L802.10 795.3L802.26 858.8L802.41 923.5L806.20 923.5L806.50 923.5L806.50 884.5L1565.00 884.5" stroke="#d83030" fill="none" shape-rendering="auto"/><path d="M47 924.5L49.8 924.5L54.3 924.5L55.4 923L56.4 924.5L57.4 924.5L61.9 924.5L63.0 923L64.0 924.5L64.9 924.5L69.4 924.5L70.5 923L71.5 924.5L72.5 924.5L77.0 924.5L78.1 923L79.1 924.5L80.1 924.5L84.6 924.5L85.7 923L86.7 924.5L87.7 924.5L92.2 924.5L93.3 923L94.3 924.5L95.2 924.5L99.7 924.5L100.8 923L101.8 924.5L102.8 924.5L107.3 924.5L108.4 923L109.4 924.5L110.4 924.5L114.9 924.5L116.0 923L117.0 924.5L118.0 924.5L122.5 924.5L123.6 923L124.6 924.5L125.5 924.5L130.0 924.5L131.1 923L132.1 924.5L133.1 924.5L137.6 924.5L138.7 923L139.7 924.5L140.7 924.5L145.2 924.5L146.3 923L147.3 924.5L148.3 924.5L152.8 924.5L153.9 923L154.9 924.5L155.8 924.5L160.3 924.5L161.4 923L162.4 924.5L163.4 924.5L167.9 924.5L169.0 923L170.0 924.5L171.0 924.5L175.5 924.5L176.6 923L177.6 924.5L178.6 924.5L183.1 924.5L184.2 923L185.2 924.5L186.1 924.5L190.6 924.5L191.7 923L192.7 924.5L193.7 924.5L198.2 924.5L199.3 923L200.3 924.5L201.3 924.5L205.8 924.5L206.9 923L207.9 924.5L208.9 924.5L213.4 924.5L214.5 923L215.5 924.5L216.4 924.5L220.9 924.5L222.0 923L223.0 924.5L224.0 924.5L228.5 924.5L229.6 923L230.6 924.5L231.6 924.5L236.1 924.5L237.2 923L238.2 924.5L239.1 924.5L243.6 924.5L244.7 923L245.7 924.5L246.7 924.5L251.2 924.5L252.3 923L253.3 924.5L254.3 924.5L258.8 924.5L259.9 923L260.9 924.5L261.9 924.5L266.4 924.5L267.5 923L268.5 924.5L269.4 924.5L273.9 924.5L275.0 923L276.0 924.5L277.0 924.5L281.5 924.5L282.6 923L283.6 924.5L284.6 924.5L289.1 924.5L290.2 923L291.2 924.5L292.2 924.5L296.7 924.5L297.8 923L298.8 924.5L299.7 924.5L304.2 924.5L305.3 923L306.3 924.5L307.3 924.5L311.8 924.5L312.9 923L313.9 924.5L314.9 924.5L319.4 924.5L320.5 923L321.5 924.5L322.5 924.5L327.0 924.5L328.1 923L329.1 924.5L330.0 924.5L334.5 924.5L335.6 923L336.6 924.5L337.6 924.5L342.1 924.5L343.2 923L344.2 924.5L345.2 924.5L349.7 924.5L350.8 923L351.8 924.5L352.8 924.5L357.3 924.5L358.4 923L359.4 924.5L360.3 924.5L364.8 924.5L365.9 923L366.9 924.5L367.9 924.5L372.4 924.5L373.5 923L374.5 924.5L375.5 924.5L380.0 924.5L381.1 923L382.1 924.5L383.1 924.5L387.6 924.5L388.7 923L389.7 924.5L390.6 924.5L395.1 924.5L396.2 923L397.2 924.5L398.2 924.5L402.7 924.5L403.8 923L404.8 924.5L405.8 924.5L410.3 924.5L411.4 923L412.4 924.5L413.4 924.5L417.9 924.5L419.0 923L420.0 924.5L420.9 924.5L425.4 924.5L426.5 923L427.5 924.5L428.5 924.5L433.0 924.5L434.1 923L435.1 924.5L436.1 924.5L440.6 924.5L441.7 923L442.7 924.5L443.6 924.5L448.1 924.5L449.2 923L450.2 924.5L451.2 924.5L455.7 924.5L456.8 923L457.8 924.5L458.8 924.5L463.3 924.5L464.4 923L465.4 924.5L466.4 924.5L470.9 924.5L472.0 923L473.0 924.5L473.9 924.5L478.4 924.5L479.5 923L480.5 924.5L481.5 924.5L486.0 924.5L487.1 923L488.1 924.5L489.1 924.5L493.6 924.5L494.7 923L495.7 924.5L496.7 924.5L501.2 924.5L502.3 923L503.3 924.5L504.2 924.5L508.7 924.5L509.8 923L510.8 924.5L511.8 924.5L516.3 924.5L517.4 923L518.4 924.5L519.4 924.5L523.9 924.5L525.0 923L526.0 924.5L527.0 924.5L531.5 924.5L532.6 923L533.6 924.5L534.5 924.5L539.0 924.5L540.1 923L541.1 924.5L542.1 924.5L546.6 924.5L547.7 923L548.7 924.5L549.7 924.5L554.2 924.5L555.3 923L556.3 924.5L557.3 924.5L561.8 924.5L562.9 923L563.9 924.5L564.8 924.5L569.3 924.5L570.4 923L571.4 924.5L572.4 924.5L576.9 924.5L578.0 923L579.0 924.5L580.0 924.5L584.5 924.5L585.6 923L586.6 924.5L587.6 924.5L592.1 924.5L593.2 923L594.2 924.5L595.1 924.5L599.6 924.5L600.7 923L601.7 924.5L602.7 924.5L607.2 924.5L608.3 923L609.3 924.5L610.3 924.5L614.8 924.5L615.9 923L616.9 924.5L617.8 924.5L622.3 924.5L623.4 923L624.4 924.5L625.4 924.5L629.9 924.5L631.0 923L632.0 924.5L633.0 924.5L637.5 924.5L638.6 923L639.6 924.5L640.6 924.5L645.1 924.5L646.2 923L647.2 924.5L648.1 924.5L652.6 924.5L653.7 923L654.7 924.5L655.7 924.5L660.2 924.5L661.3 923L662.3 924.5L663.3 924.5L667.8 924.5L668.9 923L669.9 924.5L670.9 924.5L675.4 924.5L676.5 923L677.5 924.5L678.4 924.5L682.9 924.5L684.0 923L685.0 924.5L686.0 924.5L690.5 924.5L691.6 923L692.6 924.5L693.6 924.5L698.1 924.5L699.2 923L700.2 924.5L701.2 924.5L705.7 924.5L706.8 923L707.8 924.5L708.7 924.5L713.2 924.5L714.3 923L715.3 924.5L716.3 924.5L720.8 924.5L721.9 923L722.9 924.5L723.9 924.5L728.4 924.5L729.5 923L730.5 924.5L731.5 924.5L736.0 924.5L737.1 923L738.1 924.5L739.0 924.5L743.5 924.5L744.6 923L745.6 924.5L746.6 924.5L751.1 924.5L752.2 923L753.2 924.5L754.2 924.5L758.7 924.5L759.8 923L760.8 924.5L761.8 924.5L766.3 924.5L767.4 923L768.4 924.5L769.3 924.5L773.8 924.5L774.9 923L775.9 924.5L776.9 924.5L781.4 924.5L782.5 923L783.5 924.5L784.5 924.5L789.0 924.5L790.1 923L791.1 924.5L792.1 924.5L796.6 924.5L797.7 923L798.7 924.5L799.6 924.5L804.1 924.5L805.2 923L806.2 924.5L1565 924.5" stroke="#30d030" fill="none" shape-rendering="auto" stroke-width="1.2"/><path d="M47 766.5H141M141 765.5H1484M1484 766.5H1565" stroke="#48c8c8" fill="none"/><path d="M47.5 922.5L50.2 923.7L52.2 906.0L57.8 906.5L59.8 892.4L65.4 893.3L67.4 882.0L73.0 882.8L75.0 870.3L80.5 871.1L82.5 859.3L88.1 860.1L90.1 847.8L95.7 848.7L97.7 837.2L103.2 838.1L105.2 829.7L110.8 830.8L112.8 823.6L118.4 824.5L120.4 814.3L126.0 815.2L128.0 806.1L133.5 807.1L135.5 799.0L141.1 800.0L143.1 792.4L148.7 793.4L150.7 785.8L156.3 786.9L158.3 779.2L163.8 780.3L165.8 772.9L171.4 774.0L173.4 767.2L179.0 768.3L181.0 762.2L186.6 763.3L188.6 757.6L194.1 758.8L196.1 752.9L201.7 754.1L203.7 747.6L209.3 748.7L211.3 742.1L216.9 743.2L218.9 737.2L224.4 738.4L226.4 733.2L232.0 734.4L234.0 729.7L239.6 731.0L241.6 726.3L247.2 727.5L249.2 722.9L254.7 724.1L256.7 719.5L262.3 720.7L264.3 716.2L269.9 717.5L271.9 713.1L277.4 714.3L279.4 710.1L285.0 711.4L287.0 707.4L292.6 708.6L294.6 704.7L300.2 706.0L302.2 702.1L307.7 703.4L309.7 699.6L315.3 700.8L317.3 697.1L322.9 698.4L324.9 694.6L330.5 695.9L332.5 692.2L338.0 693.5L340.0 689.8L345.6 691.1L347.6 687.4L353.2 688.7L355.2 684.9L360.8 686.2L362.8 682.3L368.3 683.6L370.3 679.9L375.9 681.2L377.9 677.7L383.5 678.9L385.5 675.6L391.1 676.9L393.1 673.8L398.6 675.1L400.6 672.2L406.2 673.5L408.2 670.7L413.8 672.0L415.8 669.2L421.4 670.6L423.4 667.9L428.9 669.2L430.9 666.6L436.5 667.9L438.5 665.3L444.1 666.7L446.1 664.2L451.7 665.5L453.7 663.0L459.2 664.4L461.2 662.0L466.8 663.3L468.8 660.9L474.4 662.3L476.4 660.0L481.9 661.3L483.9 659.0L489.5 660.4L491.5 658.1L497.1 659.5L499.1 657.3L504.7 658.6L506.7 656.4L512.2 657.8L514.2 655.6L519.8 657.0L521.8 654.9L527.4 656.2L529.4 654.1L535.0 655.5L537.0 653.4L542.5 654.8L544.5 652.7L550.1 654.1L552.1 652.0L557.7 653.4L559.7 651.3L565.3 652.7L567.3 650.7L572.8 652.0L574.8 650.0L580.4 651.4L582.4 649.4L588.0 650.8L590.0 648.8L595.6 650.2L597.6 648.2L603.1 649.6L605.1 647.7L610.7 649.0L612.7 647.1L618.3 648.5L620.3 646.6L625.9 647.9L627.9 646.0L633.4 647.4L635.4 645.5L641.0 646.9L643.0 645.1L648.6 646.4L650.6 644.6L656.1 646.0L658.1 644.2L663.7 645.6L665.7 643.8L671.3 645.2L673.3 643.4L678.9 644.8L680.9 643.1L686.4 644.5L688.4 642.8L694.0 644.2L696.0 642.5L701.6 643.9L703.6 642.2L709.2 643.6L711.2 642.0L716.7 643.3L718.7 641.7L724.3 643.1L726.3 641.5L731.9 642.9L733.9 641.2L739.5 642.6L741.5 641.0L747.0 642.4L749.0 640.8L754.6 642.2L756.6 640.6L762.2 642.0L764.2 640.4L769.8 641.8L771.8 640.2L777.3 641.6L779.3 640.0L784.9 641.4L786.9 639.8L792.5 641.2L794.5 639.6L800.1 641.0L802.1 639.4L806.0 640.0L813.6 642.4L821.2 645.2L828.8 648.0L836.4 650.7L844.0 653.5L851.5 656.2L859.1 658.9L866.7 661.5L874.3 664.2L881.9 666.8L889.5 669.3L897.1 671.9L904.7 674.4L912.3 676.9L919.9 679.4L927.4 681.8L935.0 684.3L942.6 686.7L950.2 689.0L957.8 691.4L965.4 693.7L973.0 696.0L980.6 698.3L988.2 700.6L995.8 702.8L1003.3 705.0L1010.9 707.2L1018.5 709.4L1026.1 711.6L1033.7 713.7L1041.3 715.8L1048.9 717.9L1056.5 719.9L1064.1 722.0L1071.7 724.0L1079.2 726.0L1086.8 728.0L1094.4 730.0L1102.0 731.9L1109.6 733.8L1117.2 735.7L1124.8 737.6L1132.4 739.5L1140.0 741.3L1147.5 743.2L1155.1 745.0L1162.7 746.8L1170.3 748.5L1177.9 750.3L1185.5 752.0L1193.1 753.7L1200.7 755.5L1208.3 757.1L1215.9 758.8L1223.5 760.5L1231.0 762.1L1238.6 763.7L1246.2 765.3L1253.8 766.9L1261.4 768.5L1269.0 770.0L1276.6 771.6L1284.2 773.1L1291.8 774.6L1299.3 776.1L1306.9 777.6L1314.5 779.1L1322.1 780.5L1329.7 781.9L1337.3 783.4L1344.9 784.8L1352.5 786.2L1360.1 787.5L1367.7 788.9L1375.2 790.3L1382.8 791.6L1390.4 792.9L1398.0 794.2L1405.6 795.5L1413.2 796.8L1420.8 798.1L1428.4 799.3L1436.0 800.6L1443.6 801.8L1451.2 803.0L1458.7 804.3L1466.3 805.5L1473.9 806.6L1481.5 807.8L1489.1 809.0L1496.7 810.1L1504.3 811.3L1511.9 812.4L1519.5 813.5L1527.0 814.6L1534.6 815.7L1542.2 816.8L1549.8 817.9L1557.4 818.9L1565.0 820.0" stroke="#1818e0" fill="none" stroke-width="1.25" shape-rendering="auto"/><path d="M47 923.5H178.5V434.5H1237V435.5H1244L1248 437L1249.5 440V922.5H1280V923.5H1565" stroke="#d040d8" fill="none"/><path d="M178.5 436V923" stroke="#e040d0" stroke-width="1.3" shape-rendering="auto"/><path d="M47.5 429.5H1565.5V973.5H47.5ZM47.5 973V981M199.5 973V981M351.5 973V981M502.5 973V981M654.5 973V981M806.5 973V981M958.5 973V981M1110.5 973V981M1261.5 973V981M1413.5 973V981M1565.5 973V981M40 429.5H47M40 478.5H47M40 528.5H47M40 577.5H47M40 627.5H47M40 676.5H47M40 726.5H47M40 775.5H47M40 825.5H47M40 874.5H47M40 924.5H47M40 973.5H47" stroke="#e0e0e0" fill="none"/><g font-family="Liberation Sans, sans-serif" font-size="14" font-weight="bold" fill="#e0e0e0"><text x="41" y="434" text-anchor="end">5.0V</text><text x="41" y="483" text-anchor="end">4.5V</text><text x="41" y="533" text-anchor="end">4.0V</text><text x="41" y="582" text-anchor="end">3.5V</text><text x="41" y="632" text-anchor="end">3.0V</text><text x="41" y="681" text-anchor="end">2.5V</text><text x="41" y="731" text-anchor="end">2.0V</text><text x="41" y="780" text-anchor="end">1.5V</text><text x="41" y="830" text-anchor="end">1.0V</text><text x="41" y="879" text-anchor="end">0.5V</text><text x="41" y="929" text-anchor="end">0.0V</text><text x="41" y="978" text-anchor="end">-0.5V</text><text x="47" y="994" text-anchor="middle">0ms</text><text x="199" y="994" text-anchor="middle">20ms</text><text x="351" y="994" text-anchor="middle">40ms</text><text x="502" y="994" text-anchor="middle">60ms</text><text x="654" y="994" text-anchor="middle">80ms</text><text x="806" y="994" text-anchor="middle">100ms</text><text x="958" y="994" text-anchor="middle">120ms</text><text x="1110" y="994" text-anchor="middle">140ms</text><text x="1261" y="994" text-anchor="middle">160ms</text><text x="1413" y="994" text-anchor="middle">180ms</text><text x="1565" y="994" text-anchor="middle">200ms</text></g><g font-family="Liberation Sans, sans-serif" font-size="13" font-weight="bold" letter-spacing="0.3" text-anchor="middle"><text x="197.5" y="424" fill="#e02828">V(n004)</text><text x="500.6" y="424" fill="#38e038">V(n007)</text><text x="804" y="424" fill="#1414e0">V(n006)</text><text x="1106.5" y="424" fill="#30c8c0">V(n002)</text><text x="1409.5" y="424" fill="#d040d8">V(out)</text></g>
<!-- title -->
<g>
<rect x="7" y="387" width="16" height="16" fill="#c8c8c8"/>
<path d="M10 396L14 392L17 395L22 390" stroke="#d01010" stroke-width="2" fill="none" shape-rendering="auto"/>
<rect x="7" y="387" width="3" height="16" fill="#000"/>
<rect x="7" y="400" width="16" height="3" fill="#000"/>
<path d="M8.5 388V400M8 401.5H22" stroke="#fff" stroke-dasharray="1.5 1.5"/>
</g>
<text x="27" y="402" font-family="Liberation Sans, sans-serif" font-size="13" font-weight="bold" letter-spacing="0.5" fill="#0a2a90">Draft3.raw</text>
<text x="26" y="401" font-family="Liberation Sans, sans-serif" font-size="13" font-weight="bold" letter-spacing="0.5" fill="#fff">Draft3.raw</text>
<g shape-rendering="auto">
<rect x="1520.5" y="385.5" width="20" height="20" rx="3" fill="url(#bb)" stroke="#fff"/>
<rect x="1525" y="398" width="7" height="3" fill="#fff"/>
<rect x="1543.5" y="385.5" width="20" height="20" rx="3" fill="url(#bb)" stroke="#fff"/>
<path d="M1549.5 390.5H1558.5V399.5H1549.5Z" stroke="#fff" fill="none"/><rect x="1548" y="390" width="11" height="3" fill="#fff"/>
<rect x="1566.5" y="385.5" width="20" height="20" rx="3" fill="url(#cb)" stroke="#fff"/>
<path d="M1571.5 390.5L1581.5 400.5M1581.5 390.5L1571.5 400.5" stroke="#fff" stroke-width="2"/>
</g>
</svg>
</body></html>
